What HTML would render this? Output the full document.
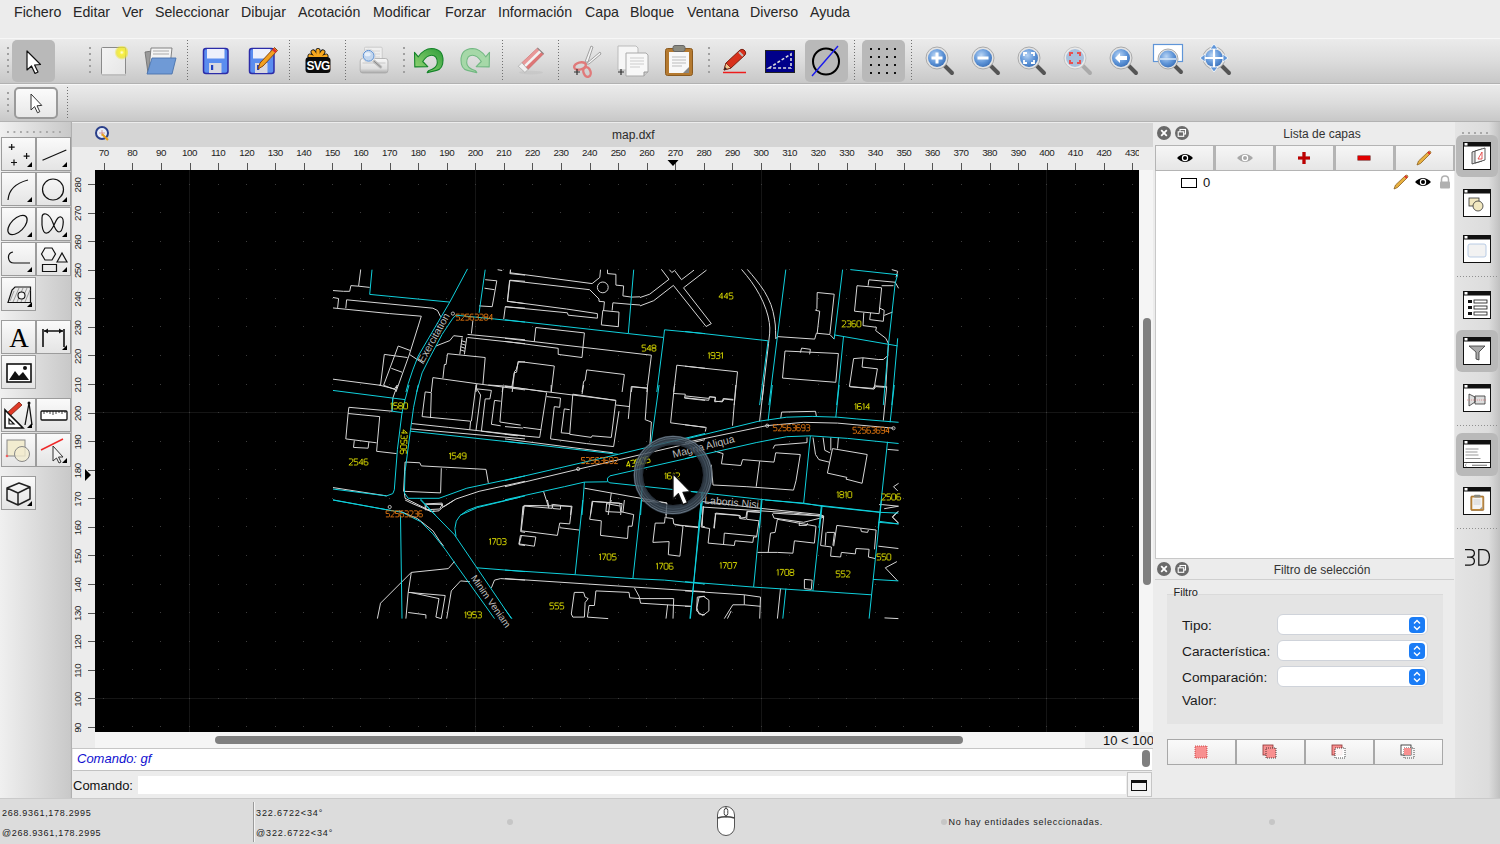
<!DOCTYPE html>
<html><head><meta charset="utf-8">
<style>
*{margin:0;padding:0;box-sizing:border-box}
html,body{width:1500px;height:844px;overflow:hidden;background:#ececec;font-family:"Liberation Sans",sans-serif;color:#222}
.a{position:absolute}
#menu span{position:absolute;top:3.5px;font-size:14.2px;color:#262626;white-space:nowrap}
.tb{position:absolute;left:0;width:1500px;background:linear-gradient(#ebebeb,#dcdcdc 50%,#c8c8c8)}
.hd{position:absolute;width:2px;background-image:linear-gradient(#a0a0a0 2px,transparent 2px);background-size:2px 6px}
.sep{position:absolute;width:1px;background-image:linear-gradient(#707070 50%,transparent 50%);background-size:1px 3px}
.sel{position:absolute;background:#b9b9b9;border-radius:5px}
.tbtn{position:absolute;width:35px;height:34px;border:1px solid #9c9c9c;background:linear-gradient(#fafafa,#e4e4e4)}
.tri{position:absolute;right:3px;bottom:3px;width:0;height:0;border-left:5px solid transparent;border-bottom:5px solid #000}
.rl{position:absolute;font-size:11px;color:#1e1e1e;white-space:nowrap}
</style></head><body>
<!-- menu -->
<div id="menu" class="a" style="left:0;top:0;width:1500px;height:38px;background:#ececec">
<span style="left:14px">Fichero</span><span style="left:73px">Editar</span><span style="left:122px">Ver</span><span style="left:155px">Seleccionar</span><span style="left:241px">Dibujar</span><span style="left:298px">Acotación</span><span style="left:373px">Modificar</span><span style="left:445px">Forzar</span><span style="left:498px">Información</span><span style="left:585px">Capa</span><span style="left:630px">Bloque</span><span style="left:687px">Ventana</span><span style="left:750px">Diverso</span><span style="left:810px">Ayuda</span>
</div>
<!-- toolbar 1 -->
<div class="tb" style="top:38px;height:46px;border-top:1px solid #f7f7f7;border-bottom:1px solid #b2b2b2"></div>
<!-- toolbar 2 -->
<div class="tb" style="top:84px;height:38px;border-top:1px solid #f7f7f7;border-bottom:1px solid #b2b2b2"></div>


<!-- toolbar1 icons -->
<div class="hd" style="left:7px;top:47px;height:26px"></div>
<div class="sel" style="left:12px;top:40px;width:43px;height:42px"></div>
<svg class="a" style="left:22px;top:49px" width="22" height="26" viewBox="0 0 22 26"><path d="M5 2 L5 21 L9.5 17 L13 24.5 L16 23 L12.6 16 L18.5 15.5 Z" fill="#fff" stroke="#111" stroke-width="1.2" stroke-linejoin="round"/></svg>
<div class="hd" style="left:89px;top:47px;height:26px"></div>
<svg class="a" style="left:100px;top:46px" width="28" height="31" viewBox="0 0 28 31"><defs><radialGradient id="gl"><stop offset="0" stop-color="#ffffe8"/><stop offset=".3" stop-color="#f8f040"/><stop offset=".7" stop-color="#ece428" stop-opacity=".75"/><stop offset="1" stop-color="#ece428" stop-opacity="0"/></radialGradient><linearGradient id="pg" x1="0" y1="0" x2="1" y2="1"><stop offset="0" stop-color="#f4f4f4"/><stop offset="1" stop-color="#e6e6e6"/></linearGradient></defs><rect x="1.5" y="1.5" width="24" height="27" rx="1" fill="url(#pg)" stroke="#8a8a8a"/><rect x="2" y="28" width="24" height="2" fill="#c0c0c0"/><circle cx="21.8" cy="6.5" r="7.5" fill="url(#gl)"/></svg>
<svg class="a" style="left:143px;top:46px" width="34" height="30" viewBox="0 0 34 30"><path d="M2 6 L9 5 L9 26 L5 27 Z" fill="#9a9a9a" stroke="#6a6a6a" stroke-width=".8"/><path d="M8 2 L29 2 L27 20 L6 24 Z" fill="#f4f4f4" stroke="#777" stroke-width=".9"/><path d="M10 5 L26 5 M10 8 L26 8" stroke="#aaa" stroke-width="1.2"/><path d="M9 12 L33 12 L29 28 L4 28 Z" fill="#6f9ad6" stroke="#4a73ad" stroke-width=".9"/></svg>
<div class="sep" style="left:187px;top:40px;height:42px"></div>
<svg class="a" style="left:202px;top:47px" width="28" height="28" viewBox="0 0 28 28"><rect x="1.5" y="1.5" width="24.5" height="25" rx="2.5" fill="#5b8def" stroke="#2c2ca8" stroke-width="1.5"/><rect x="5" y="2" width="17.5" height="9.5" fill="#eef0fb"/><rect x="7" y="16" width="12.5" height="10" fill="#d8d8e0"/><rect x="9" y="18" width="2.2" height="5" fill="#2040c0"/></svg>
<svg class="a" style="left:248px;top:44px" width="32" height="32" viewBox="0 0 32 32"><rect x="1.5" y="4.5" width="24.5" height="25" rx="2.5" fill="#5b8def" stroke="#2c2ca8" stroke-width="1.5"/><rect x="5" y="5" width="17.5" height="9.5" fill="#eef0fb"/><rect x="7" y="19" width="12.5" height="10" fill="#d8d8e0"/><rect x="9" y="21" width="2.2" height="5" fill="#2040c0"/><path d="M10 25 L12 19 L26.5 3.5 L29.5 6.5 L15 22 Z" fill="#f2a020" stroke="#8a4a10" stroke-width="1"/><path d="M25 5 L28 8" stroke="#e03030" stroke-width="2.5"/></svg>
<div class="sep" style="left:289px;top:40px;height:42px"></div>
<svg class="a" style="left:304px;top:46px" width="28" height="30" viewBox="0 0 28 30"><path d="M11.2 12.0L6.0 10.1" stroke="#111" stroke-width="5" stroke-linecap="round"/><path d="M12.3 10.5L9.1 6.0" stroke="#111" stroke-width="5" stroke-linecap="round"/><path d="M14.0 10.0L14.0 4.5" stroke="#111" stroke-width="5" stroke-linecap="round"/><path d="M15.7 10.5L18.9 6.0" stroke="#111" stroke-width="5" stroke-linecap="round"/><path d="M16.8 12.0L22.0 10.1" stroke="#111" stroke-width="5" stroke-linecap="round"/><path d="M11.2 12.0L6.0 10.1" stroke="#f7a81e" stroke-width="3.4" stroke-linecap="round"/><path d="M12.3 10.5L9.1 6.0" stroke="#f7a81e" stroke-width="3.4" stroke-linecap="round"/><path d="M14.0 10.0L14.0 4.5" stroke="#f7a81e" stroke-width="3.4" stroke-linecap="round"/><path d="M15.7 10.5L18.9 6.0" stroke="#f7a81e" stroke-width="3.4" stroke-linecap="round"/><path d="M16.8 12.0L22.0 10.1" stroke="#f7a81e" stroke-width="3.4" stroke-linecap="round"/><rect x="1.5" y="11" width="25" height="16" rx="3.5" fill="#0a0a0a"/><text x="14" y="24.5" font-family="Liberation Sans" font-weight="bold" font-size="12" fill="#fff" text-anchor="middle" transform="scale(1 1.1)" transform-origin="14 24.5" letter-spacing="-0.7">SVG</text></svg>
<div class="sep" style="left:345px;top:40px;height:42px"></div>
<svg class="a" style="left:359px;top:46px" width="31" height="31" viewBox="0 0 31 31"><defs><linearGradient id="pb" x1="0" y1="0" x2="0" y2="1"><stop offset="0" stop-color="#f8f8f8"/><stop offset=".7" stop-color="#dedede"/><stop offset="1" stop-color="#a8a8a8"/></linearGradient></defs><rect x="5.5" y="1.2" width="17.7" height="14" rx="1" fill="#efefef" stroke="#c4c4c4" stroke-width=".8"/><path d="M9 5h12M9 8h12M9 11h12" stroke="#d6d6d6"/><rect x="1.2" y="12.5" width="27.7" height="14.5" rx="2.5" fill="url(#pb)" stroke="#a8a8a8" stroke-width=".8"/><path d="M3.5 17h23" stroke="#c8c8c8" stroke-width="1"/><path d="M15 15.2 L21.6 21" stroke="#bcbcbc" stroke-width="3.2" stroke-linecap="round"/><path d="M15 15.2 L21.6 21" stroke="#8a8a8a" stroke-width="1" stroke-linecap="round"/><circle cx="9.6" cy="9.8" r="6.6" fill="#fafafa" stroke="#c8c8c8" stroke-width=".6"/><circle cx="9.6" cy="9.8" r="5.4" fill="#c2d6ee" stroke="#5b8ed0" stroke-width="1"/><ellipse cx="8.6" cy="8.2" rx="3" ry="2" fill="#e8f0fa"/></svg>
<div class="hd" style="left:403px;top:47px;height:26px"></div>
<svg class="a" style="left:412px;top:47px" width="33" height="28" viewBox="0 0 33 28"><defs><linearGradient id="ug" x1="0" y1="1" x2="1" y2="0"><stop offset="0" stop-color="#9ad878"/><stop offset="1" stop-color="#2f9e3a"/></linearGradient></defs><path d="M2.5 5.3 L6.3 9.8 Q12 1.5 19.6 1.5 Q31 2 31 13.3 Q31 22 24.6 23.4 L15.2 25.6 L16.4 23.8 Q25.3 21 25.3 15.8 Q25.3 8.2 19.6 8.2 Q14.5 8.2 10.7 14.5 L15.8 19.6 L2.8 19.9 Z" fill="url(#ug)" stroke="#15842a" stroke-width="1.1" stroke-linejoin="round"/></svg>
<svg class="a" style="left:459px;top:47px" width="33" height="28" viewBox="0 0 33 28"><g transform="translate(33,0) scale(-1,1)"><path d="M2.5 5.3 L6.3 9.8 Q12 1.5 19.6 1.5 Q31 2 31 13.3 Q31 22 24.6 23.4 L15.2 25.6 L16.4 23.8 Q25.3 21 25.3 15.8 Q25.3 8.2 19.6 8.2 Q14.5 8.2 10.7 14.5 L15.8 19.6 L2.8 19.9 Z" fill="#a6d8a8" stroke="#72b882" stroke-width="1.1" stroke-linejoin="round"/></g></svg>
<div class="sep" style="left:502px;top:40px;height:42px"></div>
<svg class="a" style="left:516px;top:46px" width="30" height="30" viewBox="0 0 30 30"><ellipse cx="15" cy="26.6" rx="12" ry="1.8" fill="#c4c4c4" opacity=".7"/><path d="M21.5 2.1 L27.6 7.9 L12 23.5 L5.9 16.7 Z" fill="#de7676" stroke="#b85858" stroke-width=".5"/><path d="M21.5 2.1 L24.55 5 L8.95 20.1 L5.9 16.7 Z" fill="#e89898"/><path d="M24.55 5 L8.95 20.1" stroke="#f2f2f2" stroke-width="2.6"/><path d="M5.9 16.7 L12 23.5 L8.9 26.4 L2.3 20.3 Z" fill="#f0f0f0" stroke="#9a9a9a" stroke-width=".6"/><path d="M21.5 2.1 L27.6 7.9" stroke="#8a8a8a" stroke-width="1.2"/></svg>
<div class="sep" style="left:558px;top:40px;height:42px"></div>
<svg class="a" style="left:571px;top:44px" width="32" height="34" viewBox="0 0 32 34"><path d="M14 18 L20 2 L22 3 L17 18 Z" fill="#f4f4f4" stroke="#999" stroke-width=".9"/><path d="M15 20 L29 8 L30 10 L18 20 Z" fill="#f4f4f4" stroke="#999" stroke-width=".9"/><ellipse cx="9" cy="22" rx="6" ry="3.5" fill="none" stroke="#e07a7a" stroke-width="2.4" transform="rotate(-15 9 22)"/><ellipse cx="16" cy="28" rx="3.5" ry="5" fill="none" stroke="#e07a7a" stroke-width="2.4" transform="rotate(-20 16 28)"/><path d="M3 28 L9 28 M6 25 L6 31" stroke="#333" stroke-width="1.2"/></svg>
<svg class="a" style="left:616px;top:45px" width="34" height="33" viewBox="0 0 34 33"><path d="M2 1 L20 1 L22 3 L22 25 L2 25 Z" fill="#f6f6f6" stroke="#bbb"/><path d="M10 8 L30 8 L32 10 L32 27 L28 31 L10 31 Z" fill="#f8f8f8" stroke="#aaa"/><path d="M28 31 L28 27 L32 27" fill="#ccc" stroke="#999"/><path d="M14 13h14M14 16h14M14 19h14M14 22h10" stroke="#ccc"/><path d="M2 27h6M5 24v6" stroke="#333" stroke-width="1.2"/></svg>
<svg class="a" style="left:664px;top:44px" width="30" height="33" viewBox="0 0 30 33"><rect x="1.5" y="4.5" width="27" height="27" rx="2" fill="#b57a30" stroke="#8a5a20"/><rect x="5" y="8" width="20" height="21" fill="#f8f8f8"/><rect x="9" y="1.5" width="12" height="6" rx="2" fill="#8a8a80" stroke="#666"/><path d="M8 13h14M8 16h14M8 19h14M8 22h10" stroke="#bbb"/><path d="M25 23 L25 29 L19 29 Z" fill="#888"/></svg>
<div class="hd" style="left:708px;top:47px;height:26px"></div>
<svg class="a" style="left:722px;top:48px" width="26" height="26" viewBox="0 0 26 26"><path d="M2 22 L4 15 L18 2 Q20 0.5 22 2 L23 3 Q24.5 5 23 7 L9 20 Z" fill="#d8301c" stroke="#7a2010" stroke-width="1"/><path d="M2 22 L4 15 L9 20 Z" fill="#f0c890" stroke="#7a2010" stroke-width=".8"/><path d="M2 22 L3 19 L5 21 Z" fill="#222"/><path d="M17 4 L21 8" stroke="#bbb" stroke-width="2"/><path d="M1 24.5 L24 24.5" stroke="#ee1c1c" stroke-width="1.5"/></svg>
<svg class="a" style="left:765px;top:50px" width="31" height="23" viewBox="0 0 31 23"><rect x="0.5" y="0.5" width="29" height="22" fill="#00008a" stroke="#222"/><path d="M4 18 L26 4 L26 18 Z" fill="none" stroke="#ddd" stroke-width="1.6" stroke-dasharray="3 2"/></svg>
<div class="sel" style="left:805px;top:40px;width:43px;height:42px"></div>
<svg class="a" style="left:810px;top:45px" width="32" height="32" viewBox="0 0 32 32"><circle cx="16" cy="16.5" r="13" fill="none" stroke="#000" stroke-width="2"/><path d="M2 31 L28 1" stroke="#1a1aee" stroke-width="1.4"/></svg>
<div class="sep" style="left:854px;top:40px;height:42px"></div>
<div class="sel" style="left:862px;top:40px;width:43px;height:42px"></div>
<svg class="a" style="left:868px;top:46px" width="30" height="28" viewBox="0 0 30 28"><g fill="#111"><rect x="2" y="2" width="2" height="2"/><rect x="10" y="2" width="2" height="2"/><rect x="18" y="2" width="2" height="2"/><rect x="26" y="2" width="2" height="2"/><rect x="2" y="10" width="2" height="2"/><rect x="10" y="10" width="2" height="2"/><rect x="18" y="10" width="2" height="2"/><rect x="26" y="10" width="2" height="2"/><rect x="2" y="18" width="2" height="2"/><rect x="10" y="18" width="2" height="2"/><rect x="18" y="18" width="2" height="2"/><rect x="26" y="18" width="2" height="2"/><rect x="2" y="26" width="2" height="2"/><rect x="10" y="26" width="2" height="2"/><rect x="18" y="26" width="2" height="2"/><rect x="26" y="26" width="2" height="2"/></g></svg>
<div class="sep" style="left:911px;top:40px;height:42px"></div>
<svg class="a" style="left:924px;top:44.5px" width="32" height="32" viewBox="0 0 32 32"><defs><radialGradient id="zb" cx=".4" cy=".35" r=".7"><stop offset="0" stop-color="#b8d4f4"/><stop offset=".6" stop-color="#5f95d8"/><stop offset="1" stop-color="#3a70b8"/></radialGradient></defs><path d="M21 21 L28 28" stroke="#555" stroke-width="4" stroke-linecap="round"/><circle cx="13" cy="13" r="11" fill="#e4e4e4" stroke="#aaa"/><circle cx="13" cy="13" r="9" fill="url(#zb)"/><path d="M13 7.5v11M7.5 13h11" stroke="#fff" stroke-width="3"/></svg><svg class="a" style="left:970px;top:44.5px" width="32" height="32" viewBox="0 0 32 32"><path d="M21 21 L28 28" stroke="#555" stroke-width="4" stroke-linecap="round"/><circle cx="13" cy="13" r="11" fill="#e4e4e4" stroke="#aaa"/><circle cx="13" cy="13" r="9" fill="url(#zb)"/><path d="M7.5 13h11" stroke="#fff" stroke-width="3"/></svg><svg class="a" style="left:1016px;top:44.5px" width="32" height="32" viewBox="0 0 32 32"><path d="M21 21 L28 28" stroke="#555" stroke-width="4" stroke-linecap="round"/><circle cx="13" cy="13" r="11" fill="#e4e4e4" stroke="#aaa"/><circle cx="13" cy="13" r="9" fill="url(#zb)"/><path d="M8 11V8h3M15 8h3v3M18 15v3h-3M11 18H8v-3" stroke="#fff" stroke-width="1.8" fill="none"/></svg><svg class="a" style="left:1062px;top:44.5px" width="32" height="32" viewBox="0 0 32 32"><path d="M21 21 L28 28" stroke="#aaa" stroke-width="4" stroke-linecap="round"/><circle cx="13" cy="13" r="11" fill="#eaeaea" stroke="#c4c4c4"/><circle cx="13" cy="13" r="9" fill="#a8c0dc"/><path d="M8 11V8h3M15 8h3v3M18 15v3h-3M11 18H8v-3" stroke="#e85050" stroke-width="2" fill="none"/></svg><svg class="a" style="left:1108px;top:44.5px" width="32" height="32" viewBox="0 0 32 32"><path d="M21 21 L28 28" stroke="#555" stroke-width="4" stroke-linecap="round"/><circle cx="13" cy="13" r="11" fill="#e4e4e4" stroke="#aaa"/><circle cx="13" cy="13" r="9" fill="url(#zb)"/><path d="M7 13 L12 8 L12 11 L19 11 L19 15 L12 15 L12 18 Z" fill="#fff"/></svg><svg class="a" style="left:1152px;top:43px" width="34" height="34" viewBox="0 0 34 34"><rect x="1.5" y="1.5" width="29" height="17" fill="#fff" stroke="#5f95d8" stroke-width="1.2"/><path d="M22 22 L29 29" stroke="#555" stroke-width="4" stroke-linecap="round"/><circle cx="16" cy="16" r="10" fill="#e4e4e4" stroke="#aaa"/><circle cx="16" cy="16" r="8.5" fill="url(#zb)"/><path d="M8 16h16" stroke="#d8e8f8" stroke-width="1.5"/></svg><svg class="a" style="left:1199px;top:43px" width="34" height="34" viewBox="0 0 34 34"><path d="M23 23 L30 30" stroke="#555" stroke-width="4" stroke-linecap="round"/><circle cx="15" cy="15" r="11" fill="#e4e4e4" stroke="#aaa"/><circle cx="15" cy="15" r="9" fill="url(#zb)"/><path d="M15 2v26M2 15h26" stroke="#fff" stroke-width="2.2"/><path d="M15 1 L11 6 L19 6 Z M15 29 L11 24 L19 24 Z M1 15 L6 11 L6 19 Z M29 15 L24 11 L24 19 Z" fill="#5f95d8" stroke="#fff" stroke-width=".8"/></svg>
<!-- toolbar2 -->
<div class="hd" style="left:7px;top:92px;height:24px"></div>
<div class="a" style="left:14px;top:87px;width:44px;height:32px;border:2px solid #9a9a9a;border-radius:5px;background:linear-gradient(#fbfbfb,#e8e8e8)"></div>
<svg class="a" style="left:26px;top:91px" width="20" height="24" viewBox="0 0 20 24"><path d="M5 3 L5 19 L8.6 15.6 L11.5 21.8 L13.8 20.7 L11 14.8 L15.8 14.4 Z" fill="#fff" stroke="#333" stroke-width="1" stroke-linejoin="round"/></svg>
<div class="sep" style="left:67px;top:87px;height:33px"></div>

<!-- left dock -->
<div class="a" style="left:0;top:122px;width:72px;height:676px;background:linear-gradient(90deg,#f0f0f0,#dcdcdc 50%,#c9c9c9 97%,#bdbdbd)"></div>

<div class="tbtn" style="left:1px;top:137px"><svg width="33" height="32" viewBox="0 0 33 32" style="position:absolute;left:0;top:0"><path d="M9.7 6.1v6M6.7 9.1h6M24.6 15.1v6M21.6 18.1h6M12 21.5v6M9 24.5h6" stroke="#111" fill="none" stroke-width="1.2"/></svg><div class="tri"></div></div>
<div class="tbtn" style="left:36px;top:137px"><svg width="33" height="32" viewBox="0 0 33 32" style="position:absolute;left:0;top:0"><path d="M5.5 22.2 L29.3 12" stroke="#111" fill="none" stroke-width="1.2"/></svg><div class="tri"></div></div>
<div class="tbtn" style="left:1px;top:172px"><svg width="33" height="32" viewBox="0 0 33 32" style="position:absolute;left:0;top:0"><path d="M6 27 Q7 12 26 7" stroke="#111" fill="none" stroke-width="1.2"/></svg><div class="tri"></div></div>
<div class="tbtn" style="left:36px;top:172px"><svg width="33" height="32" viewBox="0 0 33 32" style="position:absolute;left:0;top:0"><circle cx="16" cy="16.5" r="10.5" stroke="#111" fill="none" stroke-width="1.2"/></svg><div class="tri"></div></div>
<div class="tbtn" style="left:1px;top:207px"><svg width="33" height="32" viewBox="0 0 33 32" style="position:absolute;left:0;top:0"><ellipse cx="15.5" cy="17" rx="12" ry="6.5" transform="rotate(-45 15.5 17)" stroke="#111" fill="none" stroke-width="1.2"/></svg><div class="tri"></div></div>
<div class="tbtn" style="left:36px;top:207px"><svg width="33" height="32" viewBox="0 0 33 32" style="position:absolute;left:0;top:0"><path d="M5 10 Q5 5 9 6 Q13 7 16 15 Q19 24 22 24 Q25 24 26 17 Q27 10 24 9 Q21 8 18 15 Q14 24 10 25 Q6 26 5 17 Z" stroke="#111" fill="none" stroke-width="1.2"/></svg><div class="tri"></div></div>
<div class="tbtn" style="left:1px;top:242px"><svg width="33" height="32" viewBox="0 0 33 32" style="position:absolute;left:0;top:0"><path d="M11 9 Q6 10 6.5 15 Q7 20 12 20 L28 20" stroke="#111" fill="none" stroke-width="1.2"/></svg><div class="tri"></div></div>
<div class="tbtn" style="left:36px;top:242px"><svg width="33" height="32" viewBox="0 0 33 32" style="position:absolute;left:0;top:0"><path d="M4.5 11 L8 5 L15 5 L18.5 11 L15 17 L8 17 Z M20 19 L25 10 L30 19 Z M5.5 21.5h14v7h-14z" stroke="#111" fill="none" stroke-width="1.2"/></svg><div class="tri"></div></div>
<div class="tbtn" style="left:1px;top:277px"><svg width="33" height="32" viewBox="0 0 33 32" style="position:absolute;left:0;top:0"><path d="M6 24.5 L10 12 L13 9 L28.5 9 L28.5 24.5 Z" fill="#e8e8e8" stroke="#111" stroke-width="1.2"/><path d="M8 23l4-10M11 24l6-14M15 24l6-14M19 24l6-14M23 24l5-12" stroke="#888" stroke-width=".8"/><circle cx="19.5" cy="17.5" r="3.5" fill="#f4f4f4" stroke="#111" stroke-width="1.1"/></svg><div class="tri"></div></div>
<div class="tbtn" style="left:1px;top:320px"><svg width="33" height="32" viewBox="0 0 33 32" style="position:absolute;left:0;top:0"><text x="17" y="26" font-family="Liberation Serif" font-size="27" text-anchor="middle" fill="#000">A</text></svg></div>
<div class="tbtn" style="left:36px;top:320px"><svg width="33" height="32" viewBox="0 0 33 32" style="position:absolute;left:0;top:0"><path d="M6 26V8M27 26V8M7 10h19" stroke="#111" stroke-width="1.6" fill="none"/><path d="M7 10l4-2.5v5zM26 10l-4-2.5v5z" fill="#111"/></svg><div class="tri"></div></div>
<div class="tbtn" style="left:1px;top:355px"><svg width="33" height="32" viewBox="0 0 33 32" style="position:absolute;left:0;top:0"><rect x="5" y="8" width="24" height="18" fill="#fff" stroke="#111" stroke-width="1.6"/><path d="M7 24 L13 15 L17 20 L21 16 L27 24 Z" fill="#111"/><circle cx="23" cy="12" r="2" fill="#111"/></svg></div>
<div class="tbtn" style="left:1px;top:398px"><svg width="33" height="32" viewBox="0 0 33 32" style="position:absolute;left:0;top:0"><path d="M3 29 L3 11 L21 29 Z" fill="#fff" stroke="#111" stroke-width="1.6"/><path d="M7 25 L7 20 L12 25 Z" fill="none" stroke="#111" stroke-width="1.2"/><path d="M6 13 L17 3 L20 6 L9 16 Z" fill="#e03a28" stroke="#7a2010" stroke-width=".8"/><path d="M27 4 L23 26 M27 4 L30 26" stroke="#111" stroke-width="1.3" fill="none"/><circle cx="27" cy="4" r="1.5" fill="#111"/></svg><div class="tri"></div></div>
<div class="tbtn" style="left:36px;top:398px"><svg width="33" height="32" viewBox="0 0 33 32" style="position:absolute;left:0;top:0"><rect x="4" y="12" width="26" height="9" rx="1" fill="#fff" stroke="#111" stroke-width="1.3"/><path d="M7 12v3M10 12v2M13 12v3M16 12v4M19 12v3M22 12v2M25 12v3M28 12v2" stroke="#111" stroke-width=".8"/></svg></div>
<div class="tbtn" style="left:1px;top:433px"><svg width="33" height="32" viewBox="0 0 33 32" style="position:absolute;left:0;top:0"><rect x="5" y="6" width="18" height="16" fill="#f2ecd0" stroke="#888" stroke-width="1"/><circle cx="20" cy="20" r="7.5" fill="#f2ecd0" fill-opacity=".8" stroke="#888" stroke-width="1"/><circle cx="5" cy="22" r="1.3" fill="#f06060"/></svg></div>
<div class="tbtn" style="left:36px;top:433px"><svg width="33" height="32" viewBox="0 0 33 32" style="position:absolute;left:0;top:0"><path d="M4 16 L26 5" stroke="#ee2a2a" stroke-width="1.4"/><path d="M16 12 L16 27 L19.5 24 L22 29 L24 28 L21.5 23 L26 23 Z" fill="#f4f4f4" stroke="#333" stroke-width="1"/></svg><div class="tri"></div></div>
<div class="tbtn" style="left:1px;top:476px"><svg width="33" height="32" viewBox="0 0 33 32" style="position:absolute;left:0;top:0"><path d="M5 11 L17 6 L28 10 L28 22 L16 28 L5 23 Z M5 11 L16 16 L28 10 M16 16 L16 28" fill="none" stroke="#222" stroke-width="1.5" stroke-linejoin="round"/></svg><div class="tri"></div></div><div class="a" style="left:7px;top:131px;width:58px;height:2px;background-image:linear-gradient(90deg,#a8a8a8 2px,transparent 2px);background-size:6.5px 2px"></div><div class="a" style="left:71px;top:122px;width:1px;height:676px;background:#b0b0b0"></div>
<!-- MDI title -->
<div class="a" style="left:72px;top:123px;width:1081px;height:24px;background:#d5d5d5"></div>
<svg class="a" style="left:95px;top:126px" width="15" height="15" viewBox="0 0 15 15"><circle cx="7" cy="7" r="6" fill="#e8eef8" stroke="#2a3f8a" stroke-width="2"/><path d="M4 7h6M7 4v6" stroke="#d08080" stroke-width=".8"/><path d="M7 8 L13 14" stroke="#e8a020" stroke-width="2.2"/></svg><div class="a" style="left:612px;top:128px;font-size:12px;color:#2a2a2a">map.dxf</div>
<!-- rulers -->
<div class="a" style="left:72px;top:147px;width:1081px;height:23px;background:#ececec"></div>
<div class="a" style="left:72px;top:147px;width:23px;height:601px;background:#ececec"></div>
<!-- canvas -->
<div class="a" style="left:95px;top:170px;width:1044px;height:562px;background:#000;overflow:hidden" id="cv"></div>
<svg class="a" style="left:95px;top:147px;overflow:hidden" width="1044" height="23" viewBox="95 147 1044 23"><rect x="104" y="163" width="1" height="7" fill="#555"/><text x="103.8" y="156.2" font-size="9.8" text-anchor="middle" fill="#1e1e1e" letter-spacing="-0.5">70</text><rect x="132" y="163" width="1" height="7" fill="#555"/><text x="132.3" y="156.2" font-size="9.8" text-anchor="middle" fill="#1e1e1e" letter-spacing="-0.5">80</text><rect x="161" y="163" width="1" height="7" fill="#555"/><text x="160.9" y="156.2" font-size="9.8" text-anchor="middle" fill="#1e1e1e" letter-spacing="-0.5">90</text><rect x="190" y="163" width="1" height="7" fill="#555"/><text x="189.5" y="156.2" font-size="9.8" text-anchor="middle" fill="#1e1e1e" letter-spacing="-0.5">100</text><rect x="218" y="163" width="1" height="7" fill="#555"/><text x="218.1" y="156.2" font-size="9.8" text-anchor="middle" fill="#1e1e1e" letter-spacing="-0.5">110</text><rect x="247" y="163" width="1" height="7" fill="#555"/><text x="246.7" y="156.2" font-size="9.8" text-anchor="middle" fill="#1e1e1e" letter-spacing="-0.5">120</text><rect x="275" y="163" width="1" height="7" fill="#555"/><text x="275.2" y="156.2" font-size="9.8" text-anchor="middle" fill="#1e1e1e" letter-spacing="-0.5">130</text><rect x="304" y="163" width="1" height="7" fill="#555"/><text x="303.8" y="156.2" font-size="9.8" text-anchor="middle" fill="#1e1e1e" letter-spacing="-0.5">140</text><rect x="332" y="163" width="1" height="7" fill="#555"/><text x="332.4" y="156.2" font-size="9.8" text-anchor="middle" fill="#1e1e1e" letter-spacing="-0.5">150</text><rect x="361" y="163" width="1" height="7" fill="#555"/><text x="360.9" y="156.2" font-size="9.8" text-anchor="middle" fill="#1e1e1e" letter-spacing="-0.5">160</text><rect x="390" y="163" width="1" height="7" fill="#555"/><text x="389.5" y="156.2" font-size="9.8" text-anchor="middle" fill="#1e1e1e" letter-spacing="-0.5">170</text><rect x="418" y="163" width="1" height="7" fill="#555"/><text x="418.1" y="156.2" font-size="9.8" text-anchor="middle" fill="#1e1e1e" letter-spacing="-0.5">180</text><rect x="447" y="163" width="1" height="7" fill="#555"/><text x="446.7" y="156.2" font-size="9.8" text-anchor="middle" fill="#1e1e1e" letter-spacing="-0.5">190</text><rect x="475" y="163" width="1" height="7" fill="#555"/><text x="475.2" y="156.2" font-size="9.8" text-anchor="middle" fill="#1e1e1e" letter-spacing="-0.5">200</text><rect x="504" y="163" width="1" height="7" fill="#555"/><text x="503.8" y="156.2" font-size="9.8" text-anchor="middle" fill="#1e1e1e" letter-spacing="-0.5">210</text><rect x="532" y="163" width="1" height="7" fill="#555"/><text x="532.4" y="156.2" font-size="9.8" text-anchor="middle" fill="#1e1e1e" letter-spacing="-0.5">220</text><rect x="561" y="163" width="1" height="7" fill="#555"/><text x="561.0" y="156.2" font-size="9.8" text-anchor="middle" fill="#1e1e1e" letter-spacing="-0.5">230</text><rect x="590" y="163" width="1" height="7" fill="#555"/><text x="589.5" y="156.2" font-size="9.8" text-anchor="middle" fill="#1e1e1e" letter-spacing="-0.5">240</text><rect x="618" y="163" width="1" height="7" fill="#555"/><text x="618.1" y="156.2" font-size="9.8" text-anchor="middle" fill="#1e1e1e" letter-spacing="-0.5">250</text><rect x="647" y="163" width="1" height="7" fill="#555"/><text x="646.7" y="156.2" font-size="9.8" text-anchor="middle" fill="#1e1e1e" letter-spacing="-0.5">260</text><rect x="675" y="163" width="1" height="7" fill="#555"/><text x="675.3" y="156.2" font-size="9.8" text-anchor="middle" fill="#1e1e1e" letter-spacing="-0.5">270</text><rect x="704" y="163" width="1" height="7" fill="#555"/><text x="703.9" y="156.2" font-size="9.8" text-anchor="middle" fill="#1e1e1e" letter-spacing="-0.5">280</text><rect x="732" y="163" width="1" height="7" fill="#555"/><text x="732.4" y="156.2" font-size="9.8" text-anchor="middle" fill="#1e1e1e" letter-spacing="-0.5">290</text><rect x="761" y="163" width="1" height="7" fill="#555"/><text x="761.0" y="156.2" font-size="9.8" text-anchor="middle" fill="#1e1e1e" letter-spacing="-0.5">300</text><rect x="790" y="163" width="1" height="7" fill="#555"/><text x="789.6" y="156.2" font-size="9.8" text-anchor="middle" fill="#1e1e1e" letter-spacing="-0.5">310</text><rect x="818" y="163" width="1" height="7" fill="#555"/><text x="818.1" y="156.2" font-size="9.8" text-anchor="middle" fill="#1e1e1e" letter-spacing="-0.5">320</text><rect x="847" y="163" width="1" height="7" fill="#555"/><text x="846.7" y="156.2" font-size="9.8" text-anchor="middle" fill="#1e1e1e" letter-spacing="-0.5">330</text><rect x="875" y="163" width="1" height="7" fill="#555"/><text x="875.3" y="156.2" font-size="9.8" text-anchor="middle" fill="#1e1e1e" letter-spacing="-0.5">340</text><rect x="904" y="163" width="1" height="7" fill="#555"/><text x="903.9" y="156.2" font-size="9.8" text-anchor="middle" fill="#1e1e1e" letter-spacing="-0.5">350</text><rect x="932" y="163" width="1" height="7" fill="#555"/><text x="932.4" y="156.2" font-size="9.8" text-anchor="middle" fill="#1e1e1e" letter-spacing="-0.5">360</text><rect x="961" y="163" width="1" height="7" fill="#555"/><text x="961.0" y="156.2" font-size="9.8" text-anchor="middle" fill="#1e1e1e" letter-spacing="-0.5">370</text><rect x="990" y="163" width="1" height="7" fill="#555"/><text x="989.6" y="156.2" font-size="9.8" text-anchor="middle" fill="#1e1e1e" letter-spacing="-0.5">380</text><rect x="1018" y="163" width="1" height="7" fill="#555"/><text x="1018.2" y="156.2" font-size="9.8" text-anchor="middle" fill="#1e1e1e" letter-spacing="-0.5">390</text><rect x="1047" y="163" width="1" height="7" fill="#555"/><text x="1046.8" y="156.2" font-size="9.8" text-anchor="middle" fill="#1e1e1e" letter-spacing="-0.5">400</text><rect x="1075" y="163" width="1" height="7" fill="#555"/><text x="1075.3" y="156.2" font-size="9.8" text-anchor="middle" fill="#1e1e1e" letter-spacing="-0.5">410</text><rect x="1104" y="163" width="1" height="7" fill="#555"/><text x="1103.9" y="156.2" font-size="9.8" text-anchor="middle" fill="#1e1e1e" letter-spacing="-0.5">420</text><rect x="1132" y="163" width="1" height="7" fill="#555"/><text x="1132.5" y="156.2" font-size="9.8" text-anchor="middle" fill="#1e1e1e" letter-spacing="-0.5">430</text><path d="M667.5 160 L678.5 160 L673 166 Z" fill="#000"/></svg>
<svg class="a" style="left:72px;top:170px;overflow:hidden" width="23" height="562" viewBox="72 170 23 562"><rect x="88" y="727" width="7" height="1" fill="#555"/><text transform="translate(81.2 727.9) rotate(-90)" font-size="9.8" text-anchor="middle" fill="#1e1e1e" letter-spacing="-0.5">90</text><rect x="88" y="698" width="7" height="1" fill="#555"/><text transform="translate(81.2 699.4) rotate(-90)" font-size="9.8" text-anchor="middle" fill="#1e1e1e" letter-spacing="-0.5">100</text><rect x="88" y="670" width="7" height="1" fill="#555"/><text transform="translate(81.2 670.8) rotate(-90)" font-size="9.8" text-anchor="middle" fill="#1e1e1e" letter-spacing="-0.5">110</text><rect x="88" y="641" width="7" height="1" fill="#555"/><text transform="translate(81.2 642.2) rotate(-90)" font-size="9.8" text-anchor="middle" fill="#1e1e1e" letter-spacing="-0.5">120</text><rect x="88" y="613" width="7" height="1" fill="#555"/><text transform="translate(81.2 613.6) rotate(-90)" font-size="9.8" text-anchor="middle" fill="#1e1e1e" letter-spacing="-0.5">130</text><rect x="88" y="584" width="7" height="1" fill="#555"/><text transform="translate(81.2 585.0) rotate(-90)" font-size="9.8" text-anchor="middle" fill="#1e1e1e" letter-spacing="-0.5">140</text><rect x="88" y="555" width="7" height="1" fill="#555"/><text transform="translate(81.2 556.5) rotate(-90)" font-size="9.8" text-anchor="middle" fill="#1e1e1e" letter-spacing="-0.5">150</text><rect x="88" y="527" width="7" height="1" fill="#555"/><text transform="translate(81.2 527.9) rotate(-90)" font-size="9.8" text-anchor="middle" fill="#1e1e1e" letter-spacing="-0.5">160</text><rect x="88" y="498" width="7" height="1" fill="#555"/><text transform="translate(81.2 499.3) rotate(-90)" font-size="9.8" text-anchor="middle" fill="#1e1e1e" letter-spacing="-0.5">170</text><rect x="88" y="470" width="7" height="1" fill="#555"/><text transform="translate(81.2 470.8) rotate(-90)" font-size="9.8" text-anchor="middle" fill="#1e1e1e" letter-spacing="-0.5">180</text><rect x="88" y="441" width="7" height="1" fill="#555"/><text transform="translate(81.2 442.2) rotate(-90)" font-size="9.8" text-anchor="middle" fill="#1e1e1e" letter-spacing="-0.5">190</text><rect x="88" y="413" width="7" height="1" fill="#555"/><text transform="translate(81.2 413.6) rotate(-90)" font-size="9.8" text-anchor="middle" fill="#1e1e1e" letter-spacing="-0.5">200</text><rect x="88" y="384" width="7" height="1" fill="#555"/><text transform="translate(81.2 385.0) rotate(-90)" font-size="9.8" text-anchor="middle" fill="#1e1e1e" letter-spacing="-0.5">210</text><rect x="88" y="355" width="7" height="1" fill="#555"/><text transform="translate(81.2 356.5) rotate(-90)" font-size="9.8" text-anchor="middle" fill="#1e1e1e" letter-spacing="-0.5">220</text><rect x="88" y="327" width="7" height="1" fill="#555"/><text transform="translate(81.2 327.9) rotate(-90)" font-size="9.8" text-anchor="middle" fill="#1e1e1e" letter-spacing="-0.5">230</text><rect x="88" y="298" width="7" height="1" fill="#555"/><text transform="translate(81.2 299.3) rotate(-90)" font-size="9.8" text-anchor="middle" fill="#1e1e1e" letter-spacing="-0.5">240</text><rect x="88" y="270" width="7" height="1" fill="#555"/><text transform="translate(81.2 270.7) rotate(-90)" font-size="9.8" text-anchor="middle" fill="#1e1e1e" letter-spacing="-0.5">250</text><rect x="88" y="241" width="7" height="1" fill="#555"/><text transform="translate(81.2 242.2) rotate(-90)" font-size="9.8" text-anchor="middle" fill="#1e1e1e" letter-spacing="-0.5">260</text><rect x="88" y="213" width="7" height="1" fill="#555"/><text transform="translate(81.2 213.6) rotate(-90)" font-size="9.8" text-anchor="middle" fill="#1e1e1e" letter-spacing="-0.5">270</text><rect x="88" y="184" width="7" height="1" fill="#555"/><text transform="translate(81.2 185.0) rotate(-90)" font-size="9.8" text-anchor="middle" fill="#1e1e1e" letter-spacing="-0.5">280</text><path d="M85 469 L85 481 L91 475 Z" fill="#000"/></svg>
<svg class="a" style="left:95px;top:170px" width="1044" height="562" viewBox="95 170 1044 562"><rect x="189" y="170" width="1" height="562" fill="#151515"/><rect x="475" y="170" width="1" height="562" fill="#151515"/><rect x="761" y="170" width="1" height="562" fill="#151515"/><rect x="1046" y="170" width="1" height="562" fill="#151515"/><rect x="95" y="698" width="1044" height="1" fill="#151515"/><rect x="95" y="412" width="1044" height="1" fill="#151515"/><g fill="#3c3c3c"><rect x="103" y="726" width="1" height="1"/><rect x="103" y="698" width="1" height="1"/><rect x="103" y="669" width="1" height="1"/><rect x="103" y="641" width="1" height="1"/><rect x="103" y="612" width="1" height="1"/><rect x="103" y="584" width="1" height="1"/><rect x="103" y="555" width="1" height="1"/><rect x="103" y="526" width="1" height="1"/><rect x="103" y="498" width="1" height="1"/><rect x="103" y="469" width="1" height="1"/><rect x="103" y="441" width="1" height="1"/><rect x="103" y="412" width="1" height="1"/><rect x="103" y="384" width="1" height="1"/><rect x="103" y="355" width="1" height="1"/><rect x="103" y="326" width="1" height="1"/><rect x="103" y="298" width="1" height="1"/><rect x="103" y="269" width="1" height="1"/><rect x="103" y="241" width="1" height="1"/><rect x="103" y="212" width="1" height="1"/><rect x="103" y="184" width="1" height="1"/><rect x="132" y="726" width="1" height="1"/><rect x="132" y="698" width="1" height="1"/><rect x="132" y="669" width="1" height="1"/><rect x="132" y="641" width="1" height="1"/><rect x="132" y="612" width="1" height="1"/><rect x="132" y="584" width="1" height="1"/><rect x="132" y="555" width="1" height="1"/><rect x="132" y="526" width="1" height="1"/><rect x="132" y="498" width="1" height="1"/><rect x="132" y="469" width="1" height="1"/><rect x="132" y="441" width="1" height="1"/><rect x="132" y="412" width="1" height="1"/><rect x="132" y="384" width="1" height="1"/><rect x="132" y="355" width="1" height="1"/><rect x="132" y="326" width="1" height="1"/><rect x="132" y="298" width="1" height="1"/><rect x="132" y="269" width="1" height="1"/><rect x="132" y="241" width="1" height="1"/><rect x="132" y="212" width="1" height="1"/><rect x="132" y="184" width="1" height="1"/><rect x="160" y="726" width="1" height="1"/><rect x="160" y="698" width="1" height="1"/><rect x="160" y="669" width="1" height="1"/><rect x="160" y="641" width="1" height="1"/><rect x="160" y="612" width="1" height="1"/><rect x="160" y="584" width="1" height="1"/><rect x="160" y="555" width="1" height="1"/><rect x="160" y="526" width="1" height="1"/><rect x="160" y="498" width="1" height="1"/><rect x="160" y="469" width="1" height="1"/><rect x="160" y="441" width="1" height="1"/><rect x="160" y="412" width="1" height="1"/><rect x="160" y="384" width="1" height="1"/><rect x="160" y="355" width="1" height="1"/><rect x="160" y="326" width="1" height="1"/><rect x="160" y="298" width="1" height="1"/><rect x="160" y="269" width="1" height="1"/><rect x="160" y="241" width="1" height="1"/><rect x="160" y="212" width="1" height="1"/><rect x="160" y="184" width="1" height="1"/><rect x="189" y="726" width="1" height="1"/><rect x="189" y="698" width="1" height="1"/><rect x="189" y="669" width="1" height="1"/><rect x="189" y="641" width="1" height="1"/><rect x="189" y="612" width="1" height="1"/><rect x="189" y="584" width="1" height="1"/><rect x="189" y="555" width="1" height="1"/><rect x="189" y="526" width="1" height="1"/><rect x="189" y="498" width="1" height="1"/><rect x="189" y="469" width="1" height="1"/><rect x="189" y="441" width="1" height="1"/><rect x="189" y="412" width="1" height="1"/><rect x="189" y="384" width="1" height="1"/><rect x="189" y="355" width="1" height="1"/><rect x="189" y="326" width="1" height="1"/><rect x="189" y="298" width="1" height="1"/><rect x="189" y="269" width="1" height="1"/><rect x="189" y="241" width="1" height="1"/><rect x="189" y="212" width="1" height="1"/><rect x="189" y="184" width="1" height="1"/><rect x="218" y="726" width="1" height="1"/><rect x="218" y="698" width="1" height="1"/><rect x="218" y="669" width="1" height="1"/><rect x="218" y="641" width="1" height="1"/><rect x="218" y="612" width="1" height="1"/><rect x="218" y="584" width="1" height="1"/><rect x="218" y="555" width="1" height="1"/><rect x="218" y="526" width="1" height="1"/><rect x="218" y="498" width="1" height="1"/><rect x="218" y="469" width="1" height="1"/><rect x="218" y="441" width="1" height="1"/><rect x="218" y="412" width="1" height="1"/><rect x="218" y="384" width="1" height="1"/><rect x="218" y="355" width="1" height="1"/><rect x="218" y="326" width="1" height="1"/><rect x="218" y="298" width="1" height="1"/><rect x="218" y="269" width="1" height="1"/><rect x="218" y="241" width="1" height="1"/><rect x="218" y="212" width="1" height="1"/><rect x="218" y="184" width="1" height="1"/><rect x="246" y="726" width="1" height="1"/><rect x="246" y="698" width="1" height="1"/><rect x="246" y="669" width="1" height="1"/><rect x="246" y="641" width="1" height="1"/><rect x="246" y="612" width="1" height="1"/><rect x="246" y="584" width="1" height="1"/><rect x="246" y="555" width="1" height="1"/><rect x="246" y="526" width="1" height="1"/><rect x="246" y="498" width="1" height="1"/><rect x="246" y="469" width="1" height="1"/><rect x="246" y="441" width="1" height="1"/><rect x="246" y="412" width="1" height="1"/><rect x="246" y="384" width="1" height="1"/><rect x="246" y="355" width="1" height="1"/><rect x="246" y="326" width="1" height="1"/><rect x="246" y="298" width="1" height="1"/><rect x="246" y="269" width="1" height="1"/><rect x="246" y="241" width="1" height="1"/><rect x="246" y="212" width="1" height="1"/><rect x="246" y="184" width="1" height="1"/><rect x="275" y="726" width="1" height="1"/><rect x="275" y="698" width="1" height="1"/><rect x="275" y="669" width="1" height="1"/><rect x="275" y="641" width="1" height="1"/><rect x="275" y="612" width="1" height="1"/><rect x="275" y="584" width="1" height="1"/><rect x="275" y="555" width="1" height="1"/><rect x="275" y="526" width="1" height="1"/><rect x="275" y="498" width="1" height="1"/><rect x="275" y="469" width="1" height="1"/><rect x="275" y="441" width="1" height="1"/><rect x="275" y="412" width="1" height="1"/><rect x="275" y="384" width="1" height="1"/><rect x="275" y="355" width="1" height="1"/><rect x="275" y="326" width="1" height="1"/><rect x="275" y="298" width="1" height="1"/><rect x="275" y="269" width="1" height="1"/><rect x="275" y="241" width="1" height="1"/><rect x="275" y="212" width="1" height="1"/><rect x="275" y="184" width="1" height="1"/><rect x="303" y="726" width="1" height="1"/><rect x="303" y="698" width="1" height="1"/><rect x="303" y="669" width="1" height="1"/><rect x="303" y="641" width="1" height="1"/><rect x="303" y="612" width="1" height="1"/><rect x="303" y="584" width="1" height="1"/><rect x="303" y="555" width="1" height="1"/><rect x="303" y="526" width="1" height="1"/><rect x="303" y="498" width="1" height="1"/><rect x="303" y="469" width="1" height="1"/><rect x="303" y="441" width="1" height="1"/><rect x="303" y="412" width="1" height="1"/><rect x="303" y="384" width="1" height="1"/><rect x="303" y="355" width="1" height="1"/><rect x="303" y="326" width="1" height="1"/><rect x="303" y="298" width="1" height="1"/><rect x="303" y="269" width="1" height="1"/><rect x="303" y="241" width="1" height="1"/><rect x="303" y="212" width="1" height="1"/><rect x="303" y="184" width="1" height="1"/><rect x="332" y="726" width="1" height="1"/><rect x="332" y="698" width="1" height="1"/><rect x="332" y="669" width="1" height="1"/><rect x="332" y="641" width="1" height="1"/><rect x="332" y="612" width="1" height="1"/><rect x="332" y="584" width="1" height="1"/><rect x="332" y="555" width="1" height="1"/><rect x="332" y="526" width="1" height="1"/><rect x="332" y="498" width="1" height="1"/><rect x="332" y="469" width="1" height="1"/><rect x="332" y="441" width="1" height="1"/><rect x="332" y="412" width="1" height="1"/><rect x="332" y="384" width="1" height="1"/><rect x="332" y="355" width="1" height="1"/><rect x="332" y="326" width="1" height="1"/><rect x="332" y="298" width="1" height="1"/><rect x="332" y="269" width="1" height="1"/><rect x="332" y="241" width="1" height="1"/><rect x="332" y="212" width="1" height="1"/><rect x="332" y="184" width="1" height="1"/><rect x="360" y="726" width="1" height="1"/><rect x="360" y="698" width="1" height="1"/><rect x="360" y="669" width="1" height="1"/><rect x="360" y="641" width="1" height="1"/><rect x="360" y="612" width="1" height="1"/><rect x="360" y="584" width="1" height="1"/><rect x="360" y="555" width="1" height="1"/><rect x="360" y="526" width="1" height="1"/><rect x="360" y="498" width="1" height="1"/><rect x="360" y="469" width="1" height="1"/><rect x="360" y="441" width="1" height="1"/><rect x="360" y="412" width="1" height="1"/><rect x="360" y="384" width="1" height="1"/><rect x="360" y="355" width="1" height="1"/><rect x="360" y="326" width="1" height="1"/><rect x="360" y="298" width="1" height="1"/><rect x="360" y="269" width="1" height="1"/><rect x="360" y="241" width="1" height="1"/><rect x="360" y="212" width="1" height="1"/><rect x="360" y="184" width="1" height="1"/><rect x="389" y="726" width="1" height="1"/><rect x="389" y="698" width="1" height="1"/><rect x="389" y="669" width="1" height="1"/><rect x="389" y="641" width="1" height="1"/><rect x="389" y="612" width="1" height="1"/><rect x="389" y="584" width="1" height="1"/><rect x="389" y="555" width="1" height="1"/><rect x="389" y="526" width="1" height="1"/><rect x="389" y="498" width="1" height="1"/><rect x="389" y="469" width="1" height="1"/><rect x="389" y="441" width="1" height="1"/><rect x="389" y="412" width="1" height="1"/><rect x="389" y="384" width="1" height="1"/><rect x="389" y="355" width="1" height="1"/><rect x="389" y="326" width="1" height="1"/><rect x="389" y="298" width="1" height="1"/><rect x="389" y="269" width="1" height="1"/><rect x="389" y="241" width="1" height="1"/><rect x="389" y="212" width="1" height="1"/><rect x="389" y="184" width="1" height="1"/><rect x="418" y="726" width="1" height="1"/><rect x="418" y="698" width="1" height="1"/><rect x="418" y="669" width="1" height="1"/><rect x="418" y="641" width="1" height="1"/><rect x="418" y="612" width="1" height="1"/><rect x="418" y="584" width="1" height="1"/><rect x="418" y="555" width="1" height="1"/><rect x="418" y="526" width="1" height="1"/><rect x="418" y="498" width="1" height="1"/><rect x="418" y="469" width="1" height="1"/><rect x="418" y="441" width="1" height="1"/><rect x="418" y="412" width="1" height="1"/><rect x="418" y="384" width="1" height="1"/><rect x="418" y="355" width="1" height="1"/><rect x="418" y="326" width="1" height="1"/><rect x="418" y="298" width="1" height="1"/><rect x="418" y="269" width="1" height="1"/><rect x="418" y="241" width="1" height="1"/><rect x="418" y="212" width="1" height="1"/><rect x="418" y="184" width="1" height="1"/><rect x="446" y="726" width="1" height="1"/><rect x="446" y="698" width="1" height="1"/><rect x="446" y="669" width="1" height="1"/><rect x="446" y="641" width="1" height="1"/><rect x="446" y="612" width="1" height="1"/><rect x="446" y="584" width="1" height="1"/><rect x="446" y="555" width="1" height="1"/><rect x="446" y="526" width="1" height="1"/><rect x="446" y="498" width="1" height="1"/><rect x="446" y="469" width="1" height="1"/><rect x="446" y="441" width="1" height="1"/><rect x="446" y="412" width="1" height="1"/><rect x="446" y="384" width="1" height="1"/><rect x="446" y="355" width="1" height="1"/><rect x="446" y="326" width="1" height="1"/><rect x="446" y="298" width="1" height="1"/><rect x="446" y="269" width="1" height="1"/><rect x="446" y="241" width="1" height="1"/><rect x="446" y="212" width="1" height="1"/><rect x="446" y="184" width="1" height="1"/><rect x="475" y="726" width="1" height="1"/><rect x="475" y="698" width="1" height="1"/><rect x="475" y="669" width="1" height="1"/><rect x="475" y="641" width="1" height="1"/><rect x="475" y="612" width="1" height="1"/><rect x="475" y="584" width="1" height="1"/><rect x="475" y="555" width="1" height="1"/><rect x="475" y="526" width="1" height="1"/><rect x="475" y="498" width="1" height="1"/><rect x="475" y="469" width="1" height="1"/><rect x="475" y="441" width="1" height="1"/><rect x="475" y="412" width="1" height="1"/><rect x="475" y="384" width="1" height="1"/><rect x="475" y="355" width="1" height="1"/><rect x="475" y="326" width="1" height="1"/><rect x="475" y="298" width="1" height="1"/><rect x="475" y="269" width="1" height="1"/><rect x="475" y="241" width="1" height="1"/><rect x="475" y="212" width="1" height="1"/><rect x="475" y="184" width="1" height="1"/><rect x="503" y="726" width="1" height="1"/><rect x="503" y="698" width="1" height="1"/><rect x="503" y="669" width="1" height="1"/><rect x="503" y="641" width="1" height="1"/><rect x="503" y="612" width="1" height="1"/><rect x="503" y="584" width="1" height="1"/><rect x="503" y="555" width="1" height="1"/><rect x="503" y="526" width="1" height="1"/><rect x="503" y="498" width="1" height="1"/><rect x="503" y="469" width="1" height="1"/><rect x="503" y="441" width="1" height="1"/><rect x="503" y="412" width="1" height="1"/><rect x="503" y="384" width="1" height="1"/><rect x="503" y="355" width="1" height="1"/><rect x="503" y="326" width="1" height="1"/><rect x="503" y="298" width="1" height="1"/><rect x="503" y="269" width="1" height="1"/><rect x="503" y="241" width="1" height="1"/><rect x="503" y="212" width="1" height="1"/><rect x="503" y="184" width="1" height="1"/><rect x="532" y="726" width="1" height="1"/><rect x="532" y="698" width="1" height="1"/><rect x="532" y="669" width="1" height="1"/><rect x="532" y="641" width="1" height="1"/><rect x="532" y="612" width="1" height="1"/><rect x="532" y="584" width="1" height="1"/><rect x="532" y="555" width="1" height="1"/><rect x="532" y="526" width="1" height="1"/><rect x="532" y="498" width="1" height="1"/><rect x="532" y="469" width="1" height="1"/><rect x="532" y="441" width="1" height="1"/><rect x="532" y="412" width="1" height="1"/><rect x="532" y="384" width="1" height="1"/><rect x="532" y="355" width="1" height="1"/><rect x="532" y="326" width="1" height="1"/><rect x="532" y="298" width="1" height="1"/><rect x="532" y="269" width="1" height="1"/><rect x="532" y="241" width="1" height="1"/><rect x="532" y="212" width="1" height="1"/><rect x="532" y="184" width="1" height="1"/><rect x="560" y="726" width="1" height="1"/><rect x="560" y="698" width="1" height="1"/><rect x="560" y="669" width="1" height="1"/><rect x="560" y="641" width="1" height="1"/><rect x="560" y="612" width="1" height="1"/><rect x="560" y="584" width="1" height="1"/><rect x="560" y="555" width="1" height="1"/><rect x="560" y="526" width="1" height="1"/><rect x="560" y="498" width="1" height="1"/><rect x="560" y="469" width="1" height="1"/><rect x="560" y="441" width="1" height="1"/><rect x="560" y="412" width="1" height="1"/><rect x="560" y="384" width="1" height="1"/><rect x="560" y="355" width="1" height="1"/><rect x="560" y="326" width="1" height="1"/><rect x="560" y="298" width="1" height="1"/><rect x="560" y="269" width="1" height="1"/><rect x="560" y="241" width="1" height="1"/><rect x="560" y="212" width="1" height="1"/><rect x="560" y="184" width="1" height="1"/><rect x="589" y="726" width="1" height="1"/><rect x="589" y="698" width="1" height="1"/><rect x="589" y="669" width="1" height="1"/><rect x="589" y="641" width="1" height="1"/><rect x="589" y="612" width="1" height="1"/><rect x="589" y="584" width="1" height="1"/><rect x="589" y="555" width="1" height="1"/><rect x="589" y="526" width="1" height="1"/><rect x="589" y="498" width="1" height="1"/><rect x="589" y="469" width="1" height="1"/><rect x="589" y="441" width="1" height="1"/><rect x="589" y="412" width="1" height="1"/><rect x="589" y="384" width="1" height="1"/><rect x="589" y="355" width="1" height="1"/><rect x="589" y="326" width="1" height="1"/><rect x="589" y="298" width="1" height="1"/><rect x="589" y="269" width="1" height="1"/><rect x="589" y="241" width="1" height="1"/><rect x="589" y="212" width="1" height="1"/><rect x="589" y="184" width="1" height="1"/><rect x="618" y="726" width="1" height="1"/><rect x="618" y="698" width="1" height="1"/><rect x="618" y="669" width="1" height="1"/><rect x="618" y="641" width="1" height="1"/><rect x="618" y="612" width="1" height="1"/><rect x="618" y="584" width="1" height="1"/><rect x="618" y="555" width="1" height="1"/><rect x="618" y="526" width="1" height="1"/><rect x="618" y="498" width="1" height="1"/><rect x="618" y="469" width="1" height="1"/><rect x="618" y="441" width="1" height="1"/><rect x="618" y="412" width="1" height="1"/><rect x="618" y="384" width="1" height="1"/><rect x="618" y="355" width="1" height="1"/><rect x="618" y="326" width="1" height="1"/><rect x="618" y="298" width="1" height="1"/><rect x="618" y="269" width="1" height="1"/><rect x="618" y="241" width="1" height="1"/><rect x="618" y="212" width="1" height="1"/><rect x="618" y="184" width="1" height="1"/><rect x="646" y="726" width="1" height="1"/><rect x="646" y="698" width="1" height="1"/><rect x="646" y="669" width="1" height="1"/><rect x="646" y="641" width="1" height="1"/><rect x="646" y="612" width="1" height="1"/><rect x="646" y="584" width="1" height="1"/><rect x="646" y="555" width="1" height="1"/><rect x="646" y="526" width="1" height="1"/><rect x="646" y="498" width="1" height="1"/><rect x="646" y="469" width="1" height="1"/><rect x="646" y="441" width="1" height="1"/><rect x="646" y="412" width="1" height="1"/><rect x="646" y="384" width="1" height="1"/><rect x="646" y="355" width="1" height="1"/><rect x="646" y="326" width="1" height="1"/><rect x="646" y="298" width="1" height="1"/><rect x="646" y="269" width="1" height="1"/><rect x="646" y="241" width="1" height="1"/><rect x="646" y="212" width="1" height="1"/><rect x="646" y="184" width="1" height="1"/><rect x="675" y="726" width="1" height="1"/><rect x="675" y="698" width="1" height="1"/><rect x="675" y="669" width="1" height="1"/><rect x="675" y="641" width="1" height="1"/><rect x="675" y="612" width="1" height="1"/><rect x="675" y="584" width="1" height="1"/><rect x="675" y="555" width="1" height="1"/><rect x="675" y="526" width="1" height="1"/><rect x="675" y="498" width="1" height="1"/><rect x="675" y="469" width="1" height="1"/><rect x="675" y="441" width="1" height="1"/><rect x="675" y="412" width="1" height="1"/><rect x="675" y="384" width="1" height="1"/><rect x="675" y="355" width="1" height="1"/><rect x="675" y="326" width="1" height="1"/><rect x="675" y="298" width="1" height="1"/><rect x="675" y="269" width="1" height="1"/><rect x="675" y="241" width="1" height="1"/><rect x="675" y="212" width="1" height="1"/><rect x="675" y="184" width="1" height="1"/><rect x="703" y="726" width="1" height="1"/><rect x="703" y="698" width="1" height="1"/><rect x="703" y="669" width="1" height="1"/><rect x="703" y="641" width="1" height="1"/><rect x="703" y="612" width="1" height="1"/><rect x="703" y="584" width="1" height="1"/><rect x="703" y="555" width="1" height="1"/><rect x="703" y="526" width="1" height="1"/><rect x="703" y="498" width="1" height="1"/><rect x="703" y="469" width="1" height="1"/><rect x="703" y="441" width="1" height="1"/><rect x="703" y="412" width="1" height="1"/><rect x="703" y="384" width="1" height="1"/><rect x="703" y="355" width="1" height="1"/><rect x="703" y="326" width="1" height="1"/><rect x="703" y="298" width="1" height="1"/><rect x="703" y="269" width="1" height="1"/><rect x="703" y="241" width="1" height="1"/><rect x="703" y="212" width="1" height="1"/><rect x="703" y="184" width="1" height="1"/><rect x="732" y="726" width="1" height="1"/><rect x="732" y="698" width="1" height="1"/><rect x="732" y="669" width="1" height="1"/><rect x="732" y="641" width="1" height="1"/><rect x="732" y="612" width="1" height="1"/><rect x="732" y="584" width="1" height="1"/><rect x="732" y="555" width="1" height="1"/><rect x="732" y="526" width="1" height="1"/><rect x="732" y="498" width="1" height="1"/><rect x="732" y="469" width="1" height="1"/><rect x="732" y="441" width="1" height="1"/><rect x="732" y="412" width="1" height="1"/><rect x="732" y="384" width="1" height="1"/><rect x="732" y="355" width="1" height="1"/><rect x="732" y="326" width="1" height="1"/><rect x="732" y="298" width="1" height="1"/><rect x="732" y="269" width="1" height="1"/><rect x="732" y="241" width="1" height="1"/><rect x="732" y="212" width="1" height="1"/><rect x="732" y="184" width="1" height="1"/><rect x="761" y="726" width="1" height="1"/><rect x="761" y="698" width="1" height="1"/><rect x="761" y="669" width="1" height="1"/><rect x="761" y="641" width="1" height="1"/><rect x="761" y="612" width="1" height="1"/><rect x="761" y="584" width="1" height="1"/><rect x="761" y="555" width="1" height="1"/><rect x="761" y="526" width="1" height="1"/><rect x="761" y="498" width="1" height="1"/><rect x="761" y="469" width="1" height="1"/><rect x="761" y="441" width="1" height="1"/><rect x="761" y="412" width="1" height="1"/><rect x="761" y="384" width="1" height="1"/><rect x="761" y="355" width="1" height="1"/><rect x="761" y="326" width="1" height="1"/><rect x="761" y="298" width="1" height="1"/><rect x="761" y="269" width="1" height="1"/><rect x="761" y="241" width="1" height="1"/><rect x="761" y="212" width="1" height="1"/><rect x="761" y="184" width="1" height="1"/><rect x="789" y="726" width="1" height="1"/><rect x="789" y="698" width="1" height="1"/><rect x="789" y="669" width="1" height="1"/><rect x="789" y="641" width="1" height="1"/><rect x="789" y="612" width="1" height="1"/><rect x="789" y="584" width="1" height="1"/><rect x="789" y="555" width="1" height="1"/><rect x="789" y="526" width="1" height="1"/><rect x="789" y="498" width="1" height="1"/><rect x="789" y="469" width="1" height="1"/><rect x="789" y="441" width="1" height="1"/><rect x="789" y="412" width="1" height="1"/><rect x="789" y="384" width="1" height="1"/><rect x="789" y="355" width="1" height="1"/><rect x="789" y="326" width="1" height="1"/><rect x="789" y="298" width="1" height="1"/><rect x="789" y="269" width="1" height="1"/><rect x="789" y="241" width="1" height="1"/><rect x="789" y="212" width="1" height="1"/><rect x="789" y="184" width="1" height="1"/><rect x="818" y="726" width="1" height="1"/><rect x="818" y="698" width="1" height="1"/><rect x="818" y="669" width="1" height="1"/><rect x="818" y="641" width="1" height="1"/><rect x="818" y="612" width="1" height="1"/><rect x="818" y="584" width="1" height="1"/><rect x="818" y="555" width="1" height="1"/><rect x="818" y="526" width="1" height="1"/><rect x="818" y="498" width="1" height="1"/><rect x="818" y="469" width="1" height="1"/><rect x="818" y="441" width="1" height="1"/><rect x="818" y="412" width="1" height="1"/><rect x="818" y="384" width="1" height="1"/><rect x="818" y="355" width="1" height="1"/><rect x="818" y="326" width="1" height="1"/><rect x="818" y="298" width="1" height="1"/><rect x="818" y="269" width="1" height="1"/><rect x="818" y="241" width="1" height="1"/><rect x="818" y="212" width="1" height="1"/><rect x="818" y="184" width="1" height="1"/><rect x="846" y="726" width="1" height="1"/><rect x="846" y="698" width="1" height="1"/><rect x="846" y="669" width="1" height="1"/><rect x="846" y="641" width="1" height="1"/><rect x="846" y="612" width="1" height="1"/><rect x="846" y="584" width="1" height="1"/><rect x="846" y="555" width="1" height="1"/><rect x="846" y="526" width="1" height="1"/><rect x="846" y="498" width="1" height="1"/><rect x="846" y="469" width="1" height="1"/><rect x="846" y="441" width="1" height="1"/><rect x="846" y="412" width="1" height="1"/><rect x="846" y="384" width="1" height="1"/><rect x="846" y="355" width="1" height="1"/><rect x="846" y="326" width="1" height="1"/><rect x="846" y="298" width="1" height="1"/><rect x="846" y="269" width="1" height="1"/><rect x="846" y="241" width="1" height="1"/><rect x="846" y="212" width="1" height="1"/><rect x="846" y="184" width="1" height="1"/><rect x="875" y="726" width="1" height="1"/><rect x="875" y="698" width="1" height="1"/><rect x="875" y="669" width="1" height="1"/><rect x="875" y="641" width="1" height="1"/><rect x="875" y="612" width="1" height="1"/><rect x="875" y="584" width="1" height="1"/><rect x="875" y="555" width="1" height="1"/><rect x="875" y="526" width="1" height="1"/><rect x="875" y="498" width="1" height="1"/><rect x="875" y="469" width="1" height="1"/><rect x="875" y="441" width="1" height="1"/><rect x="875" y="412" width="1" height="1"/><rect x="875" y="384" width="1" height="1"/><rect x="875" y="355" width="1" height="1"/><rect x="875" y="326" width="1" height="1"/><rect x="875" y="298" width="1" height="1"/><rect x="875" y="269" width="1" height="1"/><rect x="875" y="241" width="1" height="1"/><rect x="875" y="212" width="1" height="1"/><rect x="875" y="184" width="1" height="1"/><rect x="903" y="726" width="1" height="1"/><rect x="903" y="698" width="1" height="1"/><rect x="903" y="669" width="1" height="1"/><rect x="903" y="641" width="1" height="1"/><rect x="903" y="612" width="1" height="1"/><rect x="903" y="584" width="1" height="1"/><rect x="903" y="555" width="1" height="1"/><rect x="903" y="526" width="1" height="1"/><rect x="903" y="498" width="1" height="1"/><rect x="903" y="469" width="1" height="1"/><rect x="903" y="441" width="1" height="1"/><rect x="903" y="412" width="1" height="1"/><rect x="903" y="384" width="1" height="1"/><rect x="903" y="355" width="1" height="1"/><rect x="903" y="326" width="1" height="1"/><rect x="903" y="298" width="1" height="1"/><rect x="903" y="269" width="1" height="1"/><rect x="903" y="241" width="1" height="1"/><rect x="903" y="212" width="1" height="1"/><rect x="903" y="184" width="1" height="1"/><rect x="932" y="726" width="1" height="1"/><rect x="932" y="698" width="1" height="1"/><rect x="932" y="669" width="1" height="1"/><rect x="932" y="641" width="1" height="1"/><rect x="932" y="612" width="1" height="1"/><rect x="932" y="584" width="1" height="1"/><rect x="932" y="555" width="1" height="1"/><rect x="932" y="526" width="1" height="1"/><rect x="932" y="498" width="1" height="1"/><rect x="932" y="469" width="1" height="1"/><rect x="932" y="441" width="1" height="1"/><rect x="932" y="412" width="1" height="1"/><rect x="932" y="384" width="1" height="1"/><rect x="932" y="355" width="1" height="1"/><rect x="932" y="326" width="1" height="1"/><rect x="932" y="298" width="1" height="1"/><rect x="932" y="269" width="1" height="1"/><rect x="932" y="241" width="1" height="1"/><rect x="932" y="212" width="1" height="1"/><rect x="932" y="184" width="1" height="1"/><rect x="961" y="726" width="1" height="1"/><rect x="961" y="698" width="1" height="1"/><rect x="961" y="669" width="1" height="1"/><rect x="961" y="641" width="1" height="1"/><rect x="961" y="612" width="1" height="1"/><rect x="961" y="584" width="1" height="1"/><rect x="961" y="555" width="1" height="1"/><rect x="961" y="526" width="1" height="1"/><rect x="961" y="498" width="1" height="1"/><rect x="961" y="469" width="1" height="1"/><rect x="961" y="441" width="1" height="1"/><rect x="961" y="412" width="1" height="1"/><rect x="961" y="384" width="1" height="1"/><rect x="961" y="355" width="1" height="1"/><rect x="961" y="326" width="1" height="1"/><rect x="961" y="298" width="1" height="1"/><rect x="961" y="269" width="1" height="1"/><rect x="961" y="241" width="1" height="1"/><rect x="961" y="212" width="1" height="1"/><rect x="961" y="184" width="1" height="1"/><rect x="989" y="726" width="1" height="1"/><rect x="989" y="698" width="1" height="1"/><rect x="989" y="669" width="1" height="1"/><rect x="989" y="641" width="1" height="1"/><rect x="989" y="612" width="1" height="1"/><rect x="989" y="584" width="1" height="1"/><rect x="989" y="555" width="1" height="1"/><rect x="989" y="526" width="1" height="1"/><rect x="989" y="498" width="1" height="1"/><rect x="989" y="469" width="1" height="1"/><rect x="989" y="441" width="1" height="1"/><rect x="989" y="412" width="1" height="1"/><rect x="989" y="384" width="1" height="1"/><rect x="989" y="355" width="1" height="1"/><rect x="989" y="326" width="1" height="1"/><rect x="989" y="298" width="1" height="1"/><rect x="989" y="269" width="1" height="1"/><rect x="989" y="241" width="1" height="1"/><rect x="989" y="212" width="1" height="1"/><rect x="989" y="184" width="1" height="1"/><rect x="1018" y="726" width="1" height="1"/><rect x="1018" y="698" width="1" height="1"/><rect x="1018" y="669" width="1" height="1"/><rect x="1018" y="641" width="1" height="1"/><rect x="1018" y="612" width="1" height="1"/><rect x="1018" y="584" width="1" height="1"/><rect x="1018" y="555" width="1" height="1"/><rect x="1018" y="526" width="1" height="1"/><rect x="1018" y="498" width="1" height="1"/><rect x="1018" y="469" width="1" height="1"/><rect x="1018" y="441" width="1" height="1"/><rect x="1018" y="412" width="1" height="1"/><rect x="1018" y="384" width="1" height="1"/><rect x="1018" y="355" width="1" height="1"/><rect x="1018" y="326" width="1" height="1"/><rect x="1018" y="298" width="1" height="1"/><rect x="1018" y="269" width="1" height="1"/><rect x="1018" y="241" width="1" height="1"/><rect x="1018" y="212" width="1" height="1"/><rect x="1018" y="184" width="1" height="1"/><rect x="1046" y="726" width="1" height="1"/><rect x="1046" y="698" width="1" height="1"/><rect x="1046" y="669" width="1" height="1"/><rect x="1046" y="641" width="1" height="1"/><rect x="1046" y="612" width="1" height="1"/><rect x="1046" y="584" width="1" height="1"/><rect x="1046" y="555" width="1" height="1"/><rect x="1046" y="526" width="1" height="1"/><rect x="1046" y="498" width="1" height="1"/><rect x="1046" y="469" width="1" height="1"/><rect x="1046" y="441" width="1" height="1"/><rect x="1046" y="412" width="1" height="1"/><rect x="1046" y="384" width="1" height="1"/><rect x="1046" y="355" width="1" height="1"/><rect x="1046" y="326" width="1" height="1"/><rect x="1046" y="298" width="1" height="1"/><rect x="1046" y="269" width="1" height="1"/><rect x="1046" y="241" width="1" height="1"/><rect x="1046" y="212" width="1" height="1"/><rect x="1046" y="184" width="1" height="1"/><rect x="1075" y="726" width="1" height="1"/><rect x="1075" y="698" width="1" height="1"/><rect x="1075" y="669" width="1" height="1"/><rect x="1075" y="641" width="1" height="1"/><rect x="1075" y="612" width="1" height="1"/><rect x="1075" y="584" width="1" height="1"/><rect x="1075" y="555" width="1" height="1"/><rect x="1075" y="526" width="1" height="1"/><rect x="1075" y="498" width="1" height="1"/><rect x="1075" y="469" width="1" height="1"/><rect x="1075" y="441" width="1" height="1"/><rect x="1075" y="412" width="1" height="1"/><rect x="1075" y="384" width="1" height="1"/><rect x="1075" y="355" width="1" height="1"/><rect x="1075" y="326" width="1" height="1"/><rect x="1075" y="298" width="1" height="1"/><rect x="1075" y="269" width="1" height="1"/><rect x="1075" y="241" width="1" height="1"/><rect x="1075" y="212" width="1" height="1"/><rect x="1075" y="184" width="1" height="1"/><rect x="1103" y="726" width="1" height="1"/><rect x="1103" y="698" width="1" height="1"/><rect x="1103" y="669" width="1" height="1"/><rect x="1103" y="641" width="1" height="1"/><rect x="1103" y="612" width="1" height="1"/><rect x="1103" y="584" width="1" height="1"/><rect x="1103" y="555" width="1" height="1"/><rect x="1103" y="526" width="1" height="1"/><rect x="1103" y="498" width="1" height="1"/><rect x="1103" y="469" width="1" height="1"/><rect x="1103" y="441" width="1" height="1"/><rect x="1103" y="412" width="1" height="1"/><rect x="1103" y="384" width="1" height="1"/><rect x="1103" y="355" width="1" height="1"/><rect x="1103" y="326" width="1" height="1"/><rect x="1103" y="298" width="1" height="1"/><rect x="1103" y="269" width="1" height="1"/><rect x="1103" y="241" width="1" height="1"/><rect x="1103" y="212" width="1" height="1"/><rect x="1103" y="184" width="1" height="1"/><rect x="1132" y="726" width="1" height="1"/><rect x="1132" y="698" width="1" height="1"/><rect x="1132" y="669" width="1" height="1"/><rect x="1132" y="641" width="1" height="1"/><rect x="1132" y="612" width="1" height="1"/><rect x="1132" y="584" width="1" height="1"/><rect x="1132" y="555" width="1" height="1"/><rect x="1132" y="526" width="1" height="1"/><rect x="1132" y="498" width="1" height="1"/><rect x="1132" y="469" width="1" height="1"/><rect x="1132" y="441" width="1" height="1"/><rect x="1132" y="412" width="1" height="1"/><rect x="1132" y="384" width="1" height="1"/><rect x="1132" y="355" width="1" height="1"/><rect x="1132" y="326" width="1" height="1"/><rect x="1132" y="298" width="1" height="1"/><rect x="1132" y="269" width="1" height="1"/><rect x="1132" y="241" width="1" height="1"/><rect x="1132" y="212" width="1" height="1"/><rect x="1132" y="184" width="1" height="1"/></g></svg>









<!-- MAP --><svg class="a" style="left:95px;top:170px" width="1044" height="562" viewBox="95 170 1044 562"><defs><clipPath id="mc"><rect x="333" y="268" width="567" height="352"/></clipPath></defs><g clip-path="url(#mc)" fill="none" stroke-width="1" stroke-linejoin="round"><g stroke="#d6d6d6"><polyline points="360.7,269.7 358.6,286.2 369.7,287.4"/><polyline points="332.4,290.5 343.5,291.3 349.7,291.3 350.9,285.6 358.6,286.2"/><polyline points="332.4,297.4 338.6,298.5 337.6,307.9"/><polyline points="332.4,307.9 389.7,313.6 421.3,316.2"/><polyline points="346.6,299.8 345.8,308.2"/><polyline points="346.6,299.8 432.9,308.2 437.5,310.5 440.6,316.7"/><polyline points="421.3,316.2 409.4,354.4 395.9,392.0"/><polyline points="398.2,346.0 410.5,350.6"/><polyline points="398.2,346.0 383.6,385.3 395.9,389.9"/><polyline points="384.3,354.4 407.4,357.5"/><polyline points="380.5,385.3 384.3,354.4"/><polyline points="391.3,368.3 402.0,372.2"/><polyline points="332.4,379.1 380.5,385.3"/><polyline points="409.4,354.4 423.6,363.7"/><polyline points="485.2,279.7 496.8,280.8 492.2,306.7 479.1,305.9"/><polyline points="484.5,288.2 494.5,289.7"/><polyline points="497.6,269.7 502.2,270.5"/><polyline points="510.7,269.7 509.9,273.6 525.0,275.1"/><polyline points="525.0,281.3 509.9,280.2 507.6,301.3 525.0,303.6"/><polyline points="525.0,308.2 505.3,306.7 503.7,319.0"/><polyline points="472.9,320.6 471.4,333.6"/><polyline points="467.5,334.4 525.0,339.8"/><polyline points="467.5,337.5 525.0,343.7"/><polyline points="462.1,337.5 459.8,354.4"/><polyline points="466.8,337.5 464.4,354.4"/><polyline points="461.2,340.6 465.8,342.1"/><polyline points="460.9,343.7 465.5,345.2"/><polyline points="460.6,346.7 465.2,348.3"/><polyline points="460.3,349.8 464.9,351.4"/><polyline points="435.9,346.0 449.8,340.6 453.7,335.7 462.9,336.7"/><polyline points="447.5,353.7 446.0,364.5 444.4,364.5 442.9,378.3"/><polyline points="447.5,353.7 485.2,357.5 482.9,384.5"/><polyline points="432.9,377.6 476.8,383.7 525.0,389.9"/><polyline points="432.9,377.6 431.3,392.0"/><polyline points="518.4,362.2 525.0,361.8"/><polyline points="518.4,362.2 516.1,369.9 514.5,371.4 512.2,392.0"/><polyline points="476.8,383.7 476.0,392.0"/><polyline points="503.0,386.8 502.2,392.0"/><polyline points="510.4,269.7 510.4,272.8 592.1,283.6 599.8,277.4 600.5,269.7"/><polyline points="509.6,280.5 589.7,289.7 599.0,299.0 599.0,301.3 604.4,301.8 603.6,310.5"/><polyline points="509.6,280.5 507.3,301.3 566.6,309.0 597.4,313.6 597.4,318.2 568.2,315.2 567.4,312.8 505.0,306.7"/><polyline points="607.5,269.7 607.5,273.6 615.9,274.3 615.9,285.1 623.6,285.9 622.9,295.9 631.3,297.1 640.0,296.8"/><polyline points="612.9,302.8 631.3,304.4 640.0,305.0"/><polyline points="612.9,302.8 612.1,310.5"/><polyline points="602.8,310.5 619.0,312.1 618.3,326.7 601.3,324.9 602.8,310.5"/><polyline points="535.8,327.5 534.3,341.4"/><polyline points="535.8,327.5 584.4,332.9 582.0,357.5 558.2,354.4 558.2,348.3 505.0,341.4"/><polyline points="505.0,338.3 651.4,355.2 646.8,392.0"/><polyline points="518.1,361.4 554.3,366.0 551.2,392.0"/><polyline points="518.1,361.4 516.6,372.2 514.2,372.9 511.9,386.8"/><polyline points="505.0,386.0 546.6,392.0"/><polyline points="586.7,369.9 624.4,374.5 622.1,392.0"/><polyline points="586.7,369.9 585.1,380.6 583.6,381.4 582.0,392.0"/><polyline points="631.3,392.0 632.1,386.8 647.5,388.3"/><polyline points="676.8,365.2 705.0,368.3"/><polyline points="676.8,365.2 673.7,392.0"/><polyline points="777.4,336.6 814.7,339.1 816.4,333.2 829.9,334.5 834.2,339.1"/><polyline points="817.2,292.5 834.2,294.2 829.9,334.0"/><polyline points="817.2,292.5 816.9,308.6 815.5,310.3 819.7,311.2 817.2,333.2"/><polyline points="785.0,351.0 838.4,353.5 835.8,382.3 782.5,378.1 785.0,351.0"/><polyline points="800.3,352.7 801.6,348.1 810.4,349.3 809.6,354.4"/><polyline points="685.0,366.2 737.5,371.8 734.2,405.1"/><polyline points="685.0,395.9 708.7,398.4 709.6,396.7 715.5,397.6 714.7,401.8 723.1,401.0 724.0,398.9 733.3,400.1"/><polyline points="857.0,285.7 881.6,287.8 879.1,313.7 854.5,311.2 857.0,285.7"/><polyline points="868.1,285.7 868.9,279.8 896.0,282.3"/><polyline points="881.6,285.7 893.5,285.7"/><polyline points="879.1,307.8 884.2,310.3 883.3,321.3 869.7,319.6 870.6,312.8"/><polyline points="863.8,312.8 863.0,325.6 876.5,327.3 875.7,330.6 885.8,338.3 889.2,345.1"/><polyline points="884.2,315.4 892.6,312.0"/><polyline points="891.8,269.6 897.7,271.3 896.0,277.3"/><polyline points="895.2,282.3 898.6,288.3"/><polyline points="853.6,358.6 849.4,386.6 874.0,389.1 875.7,386.6 885.8,387.4 888.4,343.4"/><polyline points="853.6,358.6 863.0,357.8 878.2,359.5 883.3,359.5 888.4,355.2"/><polyline points="863.0,357.8 862.1,367.1 877.4,368.8 874.0,389.1"/><polyline points="378.9,385.0 394.3,388.9 397.4,385.0"/><polyline points="397.4,385.0 392.8,398.1 392.0,411.2"/><polyline points="348.9,407.3 392.0,411.2"/><polyline points="348.9,407.3 348.1,413.5 379.7,416.6 376.6,451.3 396.6,453.6"/><polyline points="348.1,413.5 345.8,438.9 376.6,442.8"/><polyline points="354.3,440.5 353.5,447.4 368.1,448.2 368.9,442.0"/><polyline points="425.2,391.9 422.1,416.6 470.6,421.2 469.8,429.7"/><polyline points="425.2,391.9 431.3,392.7 430.5,418.1"/><polyline points="476.0,385.0 471.4,421.2"/><polyline points="476.8,388.9 491.4,390.4 489.9,398.9 485.2,398.9 481.4,431.2 517.6,435.8"/><polyline points="476.8,388.9 480.6,395.0 476.0,430.5"/><polyline points="503.0,386.5 499.9,422.0 520.7,425.1"/><polyline points="494.5,400.4 500.7,401.2"/><polyline points="494.5,400.4 491.4,424.3 500.7,425.8"/><polyline points="488.3,385.0 512.2,386.5"/><polyline points="411.3,423.5 448.3,427.4 525.0,435.8"/><polyline points="410.5,428.9 525.0,438.9"/><polyline points="405.1,462.0 419.8,462.8 421.3,465.9 486.0,469.4 488.3,482.8"/><polyline points="405.1,462.0 403.6,491.3 440.6,492.9 441.3,468.2"/><polyline points="332.7,487.5 386.6,495.9"/><polyline points="404.4,492.9 405.1,498.3 425.2,508.3 432.9,512.1"/><polyline points="426.7,504.4 442.1,504.4 439.8,509.0 425.2,509.8 426.7,504.4"/><polyline points="442.1,507.5 456.0,499.0 479.1,491.3 525.0,481.3"/><polyline points="505.0,386.5 615.9,400.4"/><polyline points="551.2,385.0 551.2,391.9"/><polyline points="583.6,385.0 582.0,394.2"/><polyline points="546.6,392.7 539.7,437.4 505.0,434.3"/><polyline points="505.0,426.6 522.7,428.1 523.5,427.4 541.2,429.7"/><polyline points="546.6,396.6 560.5,398.1 559.7,407.3 554.3,406.6 550.5,438.9 586.7,443.6 613.6,446.6 619.0,411.2"/><polyline points="572.8,394.2 615.9,400.4 611.3,437.4 592.1,435.8 591.3,437.4 569.7,434.3 572.8,394.2"/><polyline points="564.3,408.9 569.7,409.7"/><polyline points="564.3,408.9 561.2,432.8 569.7,433.5"/><polyline points="631.3,386.5 647.5,388.1 645.2,419.7 651.4,422.0 649.8,446.6"/><polyline points="631.3,386.5 628.3,418.9"/><polyline points="615.9,405.0 629.8,406.6"/><polyline points="674.5,385.0 670.6,422.8 705.0,427.4"/><polyline points="673.7,393.5 685.3,394.2 684.5,398.1 705.0,400.4"/><polyline points="505.0,438.9 612.9,452.8"/><polyline points="505.0,486.7 579.0,469.0 705.0,439.7"/><polyline points="543.5,491.3 548.9,508.3"/><polyline points="523.5,506.0 552.0,508.3 552.8,504.4 571.3,506.7 570.5,515.0"/><polyline points="523.5,506.0 522.7,515.0"/><polyline points="584.4,488.2 666.8,502.9"/><polyline points="592.1,501.3 622.1,503.6 620.6,515.0"/><polyline points="592.1,501.3 590.5,515.0"/><polyline points="611.3,492.9 608.2,515.0"/><polyline points="606.7,503.6 619.8,506.0"/><polyline points="666.8,503.6 666.0,515.0"/><polyline points="685.0,397.7 708.7,400.3 709.6,396.9 715.5,397.2 714.7,401.1 722.3,401.9 723.1,398.6 733.3,399.4"/><polyline points="735.8,385.0 732.5,425.7"/><polyline points="685.0,424.8 706.2,427.4 705.3,431.6"/><polyline points="685.0,442.6 766.4,425.7 803.6,422.3 837.5,423.1 893.5,428.2"/><polyline points="780.8,418.1 781.6,412.1 815.5,411.3 816.4,416.4"/><polyline points="763.8,385.0 759.6,421.4"/><polyline points="849.4,385.0 850.3,386.7 873.1,388.4 874.8,385.8 886.7,386.7 883.3,420.6"/><polyline points="714.7,451.1 723.1,453.6 721.4,463.8 740.9,465.5 742.6,459.6 774.0,462.1 775.7,452.8 800.3,454.5 796.0,480.8 793.5,490.1 746.9,486.7 713.0,485.0 711.3,464.7"/><polyline points="773.1,448.6 774.8,445.2 807.0,442.6 807.0,437.5"/><polyline points="759.6,461.3 756.2,486.7"/><polyline points="813.0,437.5 815.5,454.5 818.9,459.6 829.1,462.1"/><polyline points="823.1,437.5 824.8,450.3 829.9,452.8"/><polyline points="830.8,437.5 830.8,450.3"/><polyline points="838.4,437.5 837.5,448.6"/><polyline points="832.5,448.6 867.2,454.5 862.1,483.3 846.0,479.1 846.9,477.4 827.4,473.1 832.5,448.6"/><polyline points="887.5,449.4 898.6,450.3"/><polyline points="701.9,507.0 793.5,513.0 824.0,516.4"/><polyline points="715.5,513.8 713.8,528.1"/><polyline points="714.7,513.8 740.1,515.5 740.9,518.1 746.0,517.2 746.9,511.3 759.6,512.1"/><polyline points="772.3,513.8 774.0,518.1 803.6,522.3 824.0,517.2"/><polyline points="884.2,508.7 898.6,506.2"/><polyline points="898.6,483.3 893.5,486.7 897.7,490.9"/><polyline points="898.6,511.3 892.6,517.2 898.6,523.1"/><polyline points="405.1,500.0 411.3,503.1 431.3,511.6 434.4,510.8"/><polyline points="425.2,503.9 442.1,503.1 442.9,506.9 439.0,510.8 431.3,511.6 425.2,508.5 425.2,503.9"/><polyline points="443.6,506.9 454.4,500.0"/><polyline points="399.0,510.8 417.4,518.5 432.9,530.8 439.0,540.1 443.6,546.2"/><polyline points="448.3,568.6 454.4,561.6"/><polyline points="380.5,603.2 411.3,572.4 448.3,568.6"/><polyline points="380.5,603.2 377.4,618.6"/><polyline points="411.3,572.4 408.2,592.4 445.2,595.5 441.3,618.6 435.9,617.1 439.0,598.6 410.5,592.4"/><polyline points="408.2,592.4 405.9,618.6"/><polyline points="408.2,612.5 425.9,614.8 425.9,618.6"/><polyline points="446.7,618.6 451.3,590.9 460.6,580.9 469.8,581.7"/><polyline points="491.4,587.8 494.5,580.1 500.7,578.6 525.0,580.1"/><polyline points="523.0,506.2 520.7,531.6 525.0,532.4"/><polyline points="521.5,535.4 519.1,544.7 525.0,545.5"/><polyline points="524.3,505.4 572.0,506.2 569.7,523.9 559.7,523.1 557.4,535.4 521.2,530.8 524.3,505.4"/><polyline points="552.0,503.9 552.8,508.5 560.5,509.2 560.5,505.4"/><polyline points="547.4,500.0 548.9,506.9"/><polyline points="559.7,527.7 579.0,530.0"/><polyline points="520.4,535.4 535.8,537.0 534.3,546.2 518.9,543.9 520.4,535.4"/><polyline points="592.8,501.5 619.8,503.1 620.6,511.6 633.7,514.6 632.1,526.2 628.3,526.2 627.5,538.5 600.5,535.4 601.3,520.8 589.7,519.3 592.8,501.5"/><polyline points="606.7,503.1 605.9,511.6 620.6,512.3"/><polyline points="611.3,500.0 610.5,503.1"/><polyline points="624.4,500.0 622.9,512.3"/><polyline points="642.1,500.8 666.8,503.1 666.0,517.7 673.0,518.5 673.7,523.9 683.0,526.2 679.9,556.2 668.3,554.7 669.1,541.6 652.9,542.4 655.2,523.1 664.5,523.1 665.2,516.9"/><polyline points="674.5,524.7 698.4,527.0"/><polyline points="505.0,578.6 705.0,591.7"/><polyline points="634.4,587.8 639.1,596.3 640.6,603.2 690.7,606.3"/><polyline points="595.9,590.9 629.0,592.4 629.8,597.8 639.8,598.6 673.7,598.6 673.0,618.6"/><polyline points="667.6,604.8 666.0,618.6"/><polyline points="574.3,592.4 583.6,592.4 585.1,597.1 588.2,598.6 585.1,602.5 584.4,617.1 572.8,617.1 571.3,614.0 574.3,592.4"/><polyline points="595.9,590.9 594.4,605.5 589.0,605.5 587.4,617.1 608.2,618.6"/><polyline points="705.0,596.3 699.1,597.1 696.8,607.9 699.1,614.0 705.0,614.8"/><polyline points="703.0,507.7 702.2,526.2 705.0,527.0"/><polyline points="685.0,526.2 699.6,527.7"/><polyline points="703.5,506.2 701.2,527.0 709.7,528.5 708.1,543.1 734.3,545.5 735.1,540.8 752.8,542.4 753.6,537.0 756.6,537.0 759.0,520.8 746.6,519.3 747.4,511.6 760.5,512.3"/><polyline points="715.8,513.1 738.9,515.4 739.7,518.5 745.9,519.3"/><polyline points="715.8,513.1 714.3,528.5"/><polyline points="724.3,533.1 723.5,544.7"/><polyline points="724.3,533.1 756.6,536.2"/><polyline points="701.9,501.5 762.0,508.5 820.6,514.6 823.7,516.2"/><polyline points="772.8,513.1 823.7,516.2 820.6,545.5 831.4,547.0 830.6,556.2 840.6,557.0 841.4,552.4 855.3,553.9 856.0,548.5 869.1,549.3 868.4,557.0 875.3,558.6"/><polyline points="777.4,519.3 816.0,526.2 814.4,543.1 794.4,540.8 792.9,553.2 777.4,552.4 757.4,552.4"/><polyline points="777.4,519.3 775.1,532.4 770.5,533.1 768.2,552.4"/><polyline points="799.8,522.3 799.0,525.4 806.7,525.4 807.5,523.1"/><polyline points="826.8,532.4 834.5,532.4 832.9,545.5"/><polyline points="826.0,532.4 825.2,545.5"/><polyline points="836.8,525.4 876.1,530.0 874.5,549.3"/><polyline points="836.8,525.4 833.7,546.2"/><polyline points="860.7,528.5 861.4,531.6 867.6,532.4 868.4,530.0"/><polyline points="879.1,504.6 882.2,504.6 898.4,506.2"/><polyline points="897.6,511.6 892.2,516.9 898.4,523.1"/><polyline points="878.4,546.2 898.4,548.5"/><polyline points="896.9,561.6 885.3,567.8 897.6,580.9"/><polyline points="685.0,590.9 744.3,594.8 760.5,597.1 759.7,618.6"/><polyline points="744.3,594.8 744.3,604.8 760.5,606.3"/><polyline points="697.3,597.1 703.5,596.3 708.9,600.2 708.9,610.9 702.7,615.6 696.6,610.9 697.3,597.1"/><polyline points="724.3,618.6 732.8,604.8 744.3,604.8"/><polyline points="727.4,618.6 731.2,610.9"/><polyline points="780.5,588.6 777.4,618.6"/><polyline points="804.4,579.4 812.1,580.1 811.3,589.4 804.4,588.6 804.4,579.4"/><polyline points="685.0,606.3 691.2,606.3"/><polyline points="884.5,617.9 898.4,618.6"/><polyline points="640.0,297.5 649.7,294.2 669.0,279.3 661.4,269.3"/><polyline points="640.0,305.9 653.7,300.7 673.4,285.4 706.1,326.5 711.3,323.6 683.5,287.8 706.5,270.1"/><polyline points="669.4,269.7 671.8,272.5 674.6,270.5 681.5,279.7 694.0,270.1"/><polyline points="741.5,269.4 746.5,275.4 751.3,281.6 755.6,288.0 759.5,294.7 763.0,301.8 766.0,309.4 768.0,316.0 769.3,322.5 769.8,328.0 769.6,333.9 768.5,343.7 762.0,400.0"/><polyline points="747.3,269.4 751.8,274.6 756.2,280.0 760.4,285.6 764.4,291.4 767.9,297.8 770.9,304.5 773.0,311.5 774.5,319.2 775.3,325.0 775.5,330.6 775.8,338.8 777.5,336.8"/><circle cx="602.8" cy="287.4" r="5.4"/></g><g stroke="#10d0dc"><polyline points="372.0,269.7 369.7,294.4 449.8,302.1"/><polyline points="467.5,268.9 449.8,302.1 418.2,356.0 412.8,369.9 408.2,383.7 405.9,392.0"/><polyline points="525.0,322.1 494.5,319.0 456.0,315.2 452.9,318.2 442.1,334.4 429.8,357.5 422.1,372.9 416.7,392.0"/><polyline points="485.2,269.7 479.1,312.8"/><polyline points="505.0,319.8 628.3,333.6 663.7,337.5"/><polyline points="633.7,269.7 628.3,333.6"/><polyline points="664.5,329.8 705.0,333.6"/><polyline points="664.5,329.8 663.7,337.5 656.8,392.0"/><polyline points="685.0,331.5 768.1,340.8 759.6,405.1"/><polyline points="785.8,269.6 777.4,336.6 768.9,405.1"/><polyline points="842.6,269.6 834.2,339.1"/><polyline points="834.2,334.9 897.7,345.9"/><polyline points="843.5,336.6 836.7,405.1"/><polyline points="850.3,269.6 897.7,274.7 895.2,283.2 888.4,345.1 883.3,405.1"/><polyline points="897.7,338.3 891.8,405.1"/><polyline points="332.7,390.4 392.8,398.1 405.1,399.6"/><polyline points="392.8,398.1 392.0,411.2 402.8,412.7"/><polyline points="409.0,385.0 405.1,399.6 402.0,412.7 397.4,449.7 394.3,489.8 392.8,493.6 386.6,495.9 332.7,489.0"/><polyline points="418.2,385.0 413.6,407.3 410.5,429.7 405.1,471.3 404.4,492.9 408.2,498.3 439.0,498.3 466.8,488.2 525.0,475.9"/><polyline points="410.5,431.2 525.0,443.6"/><polyline points="332.7,499.8 391.3,510.6"/><polyline points="420.5,499.0 435.2,515.0"/><polyline points="460.6,515.0 477.5,507.5 525.0,495.9"/><polyline points="505.0,441.2 618.3,454.3"/><polyline points="505.0,480.5 618.3,454.3 705.0,433.5"/><polyline points="659.1,385.0 650.6,446.6"/><polyline points="505.0,499.8 564.3,486.7 584.4,482.1 607.5,481.8"/><polyline points="705.0,454.3 609.8,475.9 607.5,478.2 607.5,481.3 609.8,482.8 705.0,492.9"/><polyline points="584.4,482.1 582.0,515.0"/><polyline points="642.1,486.7 640.6,515.0"/><polyline points="703.0,492.9 700.7,515.0"/><polyline points="685.0,439.2 757.9,421.4 786.7,417.2 812.1,416.4 837.5,417.2 856.2,418.9 898.6,422.3"/><polyline points="685.0,458.7 756.2,442.6 786.7,436.7 810.4,435.8 847.7,438.4 898.6,443.5"/><polyline points="772.3,385.0 768.1,420.6"/><polyline points="839.2,385.0 835.8,417.2"/><polyline points="894.3,385.0 890.1,422.3"/><polyline points="810.4,435.8 803.6,503.6"/><polyline points="887.5,441.8 878.2,528.1"/><polyline points="685.0,490.9 761.3,499.4 803.6,503.6 879.9,512.1"/><polyline points="701.9,491.8 698.6,528.1"/><polyline points="761.3,499.4 759.6,528.1"/><polyline points="821.4,505.3 818.9,528.1"/><polyline points="879.9,521.4 898.6,524.0"/><polyline points="332.7,500.0 388.2,510.0 402.0,512.3 420.5,521.6 432.9,533.9 445.2,549.3 456.0,564.7 494.5,618.6"/><polyline points="420.5,500.0 454.4,534.7 511.4,618.6"/><polyline points="400.5,515.4 402.0,618.6"/><polyline points="476.8,567.8 525.0,571.6"/><polyline points="505.0,570.1 575.1,574.7 632.9,578.6 664.5,580.1 705.0,584.0"/><polyline points="582.8,500.0 575.1,574.7"/><polyline points="641.4,500.0 632.9,578.6"/><polyline points="702.2,500.0 693.8,582.4 689.9,618.6"/><polyline points="505.0,609.4 511.9,618.6"/><polyline points="701.2,500.0 690.4,618.6"/><polyline points="762.0,500.0 753.6,587.1"/><polyline points="765.1,500.0 803.6,503.1 821.4,506.2 879.1,512.3 898.4,513.1"/><polyline points="822.1,505.4 812.9,590.9"/><polyline points="881.5,500.0 869.1,618.6"/><polyline points="878.4,522.3 898.4,523.9"/><polyline points="873.0,579.4 898.4,580.9"/><polyline points="685.0,581.7 753.6,587.1 812.9,590.9 871.4,594.8"/><polyline points="785.9,588.6 782.8,618.6"/><polyline points="456.0,536.4 454.9,528.4 456.3,521.2 460.0,515.6 467.2,510.5 476.8,506.8 520.0,497.2"/></g></g><g fill="none" stroke="#ddd" stroke-width=".8"><circle cx="452.9" cy="313.6" r="1.6"/><circle cx="578.2" cy="469" r="1.6"/><circle cx="767.2" cy="425.7" r="1.6"/><circle cx="893.5" cy="428.2" r="1.6"/><circle cx="389.7" cy="507" r="1.6"/></g><g fill="none" stroke="#d2d200" stroke-width="0.95" stroke-linejoin="round"><g transform="translate(718.9 292.9)"><path transform="translate(0.00 0)" d="M3.1 6.1V0L0 4.2H3.9"/><path transform="translate(5.05 0)" d="M3.1 6.1V0L0 4.2H3.9"/><path transform="translate(10.10 0)" d="M3.9 0H0.2V2.7H2.9Q3.9 2.7 3.9 3.7V5.1Q3.9 6.1 2.9 6.1H0"/></g><g transform="translate(707.9 352.5)"><path transform="translate(0.00 0)" d="M0 1.1L1.4 0V6.1"/><path transform="translate(3.05 0)" d="M0.3 6.1H2.9Q3.9 6.1 3.9 5.1V1Q3.9 0 2.9 0H1Q0 0 0 1V2.2Q0 3.2 1 3.2H3.9"/><path transform="translate(8.10 0)" d="M0 0H2.9Q3.9 0 3.9 1V2Q3.9 3 2.9 3H1.4M2.9 3Q3.9 3 3.9 4V5.1Q3.9 6.1 2.9 6.1H0"/><path transform="translate(13.15 0)" d="M0 1.1L1.4 0V6.1"/></g><g transform="translate(841.8 320.79999999999995)"><path transform="translate(0.00 0)" d="M0 0H2.9Q3.9 0 3.9 1V2.1Q3.9 2.8 3.2 3.2L0 6.1H3.9"/><path transform="translate(5.05 0)" d="M0 0H2.9Q3.9 0 3.9 1V2Q3.9 3 2.9 3H1.4M2.9 3Q3.9 3 3.9 4V5.1Q3.9 6.1 2.9 6.1H0"/><path transform="translate(10.10 0)" d="M3.6 0H1Q0 0 0 1V5.1Q0 6.1 1 6.1H2.9Q3.9 6.1 3.9 5.1V3.9Q3.9 2.9 2.9 2.9H0"/><path transform="translate(15.15 0)" d="M1 0H2.9Q3.9 0 3.9 1V5.1Q3.9 6.1 2.9 6.1H1Q0 6.1 0 5.1V1Q0 0 1 0Z"/></g><g transform="translate(641.9 345.0)"><path transform="translate(0.00 0)" d="M3.9 0H0.2V2.7H2.9Q3.9 2.7 3.9 3.7V5.1Q3.9 6.1 2.9 6.1H0"/><path transform="translate(5.05 0)" d="M3.1 6.1V0L0 4.2H3.9"/><path transform="translate(10.10 0)" d="M1 0H2.9Q3.9 0 3.9 1V2Q3.9 3 2.9 3H1Q0 3 0 2V1Q0 0 1 0ZM1 3H2.9Q3.9 3 3.9 4V5.1Q3.9 6.1 2.9 6.1H1Q0 6.1 0 5.1V4Q0 3 1 3Z"/></g><g transform="translate(390.5 402.79999999999995)"><path transform="translate(0.00 0)" d="M0 1.1L1.4 0V6.1"/><path transform="translate(3.05 0)" d="M3.9 0H0.2V2.7H2.9Q3.9 2.7 3.9 3.7V5.1Q3.9 6.1 2.9 6.1H0"/><path transform="translate(8.10 0)" d="M1 0H2.9Q3.9 0 3.9 1V2Q3.9 3 2.9 3H1Q0 3 0 2V1Q0 0 1 0ZM1 3H2.9Q3.9 3 3.9 4V5.1Q3.9 6.1 2.9 6.1H1Q0 6.1 0 5.1V4Q0 3 1 3Z"/><path transform="translate(13.15 0)" d="M1 0H2.9Q3.9 0 3.9 1V5.1Q3.9 6.1 2.9 6.1H1Q0 6.1 0 5.1V1Q0 0 1 0Z"/></g><g transform="translate(348.9 458.9)"><path transform="translate(0.00 0)" d="M0 0H2.9Q3.9 0 3.9 1V2.1Q3.9 2.8 3.2 3.2L0 6.1H3.9"/><path transform="translate(5.05 0)" d="M3.9 0H0.2V2.7H2.9Q3.9 2.7 3.9 3.7V5.1Q3.9 6.1 2.9 6.1H0"/><path transform="translate(10.10 0)" d="M3.1 6.1V0L0 4.2H3.9"/><path transform="translate(15.15 0)" d="M3.6 0H1Q0 0 0 1V5.1Q0 6.1 1 6.1H2.9Q3.9 6.1 3.9 5.1V3.9Q3.9 2.9 2.9 2.9H0"/></g><g transform="translate(449 452.9)"><path transform="translate(0.00 0)" d="M0 1.1L1.4 0V6.1"/><path transform="translate(3.05 0)" d="M3.9 0H0.2V2.7H2.9Q3.9 2.7 3.9 3.7V5.1Q3.9 6.1 2.9 6.1H0"/><path transform="translate(8.10 0)" d="M3.1 6.1V0L0 4.2H3.9"/><path transform="translate(13.15 0)" d="M0.3 6.1H2.9Q3.9 6.1 3.9 5.1V1Q3.9 0 2.9 0H1Q0 0 0 1V2.2Q0 3.2 1 3.2H3.9"/></g><g transform="translate(854.5 403.5)"><path transform="translate(0.00 0)" d="M0 1.1L1.4 0V6.1"/><path transform="translate(3.05 0)" d="M3.6 0H1Q0 0 0 1V5.1Q0 6.1 1 6.1H2.9Q3.9 6.1 3.9 5.1V3.9Q3.9 2.9 2.9 2.9H0"/><path transform="translate(8.10 0)" d="M0 1.1L1.4 0V6.1"/><path transform="translate(11.15 0)" d="M3.1 6.1V0L0 4.2H3.9"/></g><g transform="translate(836.7 491.59999999999997)"><path transform="translate(0.00 0)" d="M0 1.1L1.4 0V6.1"/><path transform="translate(3.05 0)" d="M1 0H2.9Q3.9 0 3.9 1V2Q3.9 3 2.9 3H1Q0 3 0 2V1Q0 0 1 0ZM1 3H2.9Q3.9 3 3.9 4V5.1Q3.9 6.1 2.9 6.1H1Q0 6.1 0 5.1V4Q0 3 1 3Z"/><path transform="translate(8.10 0)" d="M0 1.1L1.4 0V6.1"/><path transform="translate(11.15 0)" d="M1 0H2.9Q3.9 0 3.9 1V5.1Q3.9 6.1 2.9 6.1H1Q0 6.1 0 5.1V1Q0 0 1 0Z"/></g><g transform="translate(881.6 493.9)"><path transform="translate(0.00 0)" d="M0 0H2.9Q3.9 0 3.9 1V2.1Q3.9 2.8 3.2 3.2L0 6.1H3.9"/><path transform="translate(5.05 0)" d="M3.9 0H0.2V2.7H2.9Q3.9 2.7 3.9 3.7V5.1Q3.9 6.1 2.9 6.1H0"/><path transform="translate(10.10 0)" d="M1 0H2.9Q3.9 0 3.9 1V5.1Q3.9 6.1 2.9 6.1H1Q0 6.1 0 5.1V1Q0 0 1 0Z"/><path transform="translate(15.15 0)" d="M3.6 0H1Q0 0 0 1V5.1Q0 6.1 1 6.1H2.9Q3.9 6.1 3.9 5.1V3.9Q3.9 2.9 2.9 2.9H0"/></g><g transform="translate(489 538.6)"><path transform="translate(0.00 0)" d="M0 1.1L1.4 0V6.1"/><path transform="translate(3.05 0)" d="M0 0H3.9L1.3 6.1"/><path transform="translate(8.10 0)" d="M1 0H2.9Q3.9 0 3.9 1V5.1Q3.9 6.1 2.9 6.1H1Q0 6.1 0 5.1V1Q0 0 1 0Z"/><path transform="translate(13.15 0)" d="M0 0H2.9Q3.9 0 3.9 1V2Q3.9 3 2.9 3H1.4M2.9 3Q3.9 3 3.9 4V5.1Q3.9 6.1 2.9 6.1H0"/></g><g transform="translate(464.4 611.8)"><path transform="translate(0.00 0)" d="M0 1.1L1.4 0V6.1"/><path transform="translate(3.05 0)" d="M0.3 6.1H2.9Q3.9 6.1 3.9 5.1V1Q3.9 0 2.9 0H1Q0 0 0 1V2.2Q0 3.2 1 3.2H3.9"/><path transform="translate(8.10 0)" d="M3.9 0H0.2V2.7H2.9Q3.9 2.7 3.9 3.7V5.1Q3.9 6.1 2.9 6.1H0"/><path transform="translate(13.15 0)" d="M0 0H2.9Q3.9 0 3.9 1V2Q3.9 3 2.9 3H1.4M2.9 3Q3.9 3 3.9 4V5.1Q3.9 6.1 2.9 6.1H0"/></g><g transform="translate(599 553.9)"><path transform="translate(0.00 0)" d="M0 1.1L1.4 0V6.1"/><path transform="translate(3.05 0)" d="M0 0H3.9L1.3 6.1"/><path transform="translate(8.10 0)" d="M1 0H2.9Q3.9 0 3.9 1V5.1Q3.9 6.1 2.9 6.1H1Q0 6.1 0 5.1V1Q0 0 1 0Z"/><path transform="translate(13.15 0)" d="M3.9 0H0.2V2.7H2.9Q3.9 2.7 3.9 3.7V5.1Q3.9 6.1 2.9 6.1H0"/></g><g transform="translate(656 563.1999999999999)"><path transform="translate(0.00 0)" d="M0 1.1L1.4 0V6.1"/><path transform="translate(3.05 0)" d="M0 0H3.9L1.3 6.1"/><path transform="translate(8.10 0)" d="M1 0H2.9Q3.9 0 3.9 1V5.1Q3.9 6.1 2.9 6.1H1Q0 6.1 0 5.1V1Q0 0 1 0Z"/><path transform="translate(13.15 0)" d="M3.6 0H1Q0 0 0 1V5.1Q0 6.1 1 6.1H2.9Q3.9 6.1 3.9 5.1V3.9Q3.9 2.9 2.9 2.9H0"/></g><g transform="translate(549.7 602.9)"><path transform="translate(0.00 0)" d="M3.9 0H0.2V2.7H2.9Q3.9 2.7 3.9 3.7V5.1Q3.9 6.1 2.9 6.1H0"/><path transform="translate(5.05 0)" d="M3.9 0H0.2V2.7H2.9Q3.9 2.7 3.9 3.7V5.1Q3.9 6.1 2.9 6.1H0"/><path transform="translate(10.10 0)" d="M3.9 0H0.2V2.7H2.9Q3.9 2.7 3.9 3.7V5.1Q3.9 6.1 2.9 6.1H0"/></g><g transform="translate(719.7 562.5)"><path transform="translate(0.00 0)" d="M0 1.1L1.4 0V6.1"/><path transform="translate(3.05 0)" d="M0 0H3.9L1.3 6.1"/><path transform="translate(8.10 0)" d="M1 0H2.9Q3.9 0 3.9 1V5.1Q3.9 6.1 2.9 6.1H1Q0 6.1 0 5.1V1Q0 0 1 0Z"/><path transform="translate(13.15 0)" d="M0 0H3.9L1.3 6.1"/></g><g transform="translate(776.7 569.4)"><path transform="translate(0.00 0)" d="M0 1.1L1.4 0V6.1"/><path transform="translate(3.05 0)" d="M0 0H3.9L1.3 6.1"/><path transform="translate(8.10 0)" d="M1 0H2.9Q3.9 0 3.9 1V5.1Q3.9 6.1 2.9 6.1H1Q0 6.1 0 5.1V1Q0 0 1 0Z"/><path transform="translate(13.15 0)" d="M1 0H2.9Q3.9 0 3.9 1V2Q3.9 3 2.9 3H1Q0 3 0 2V1Q0 0 1 0ZM1 3H2.9Q3.9 3 3.9 4V5.1Q3.9 6.1 2.9 6.1H1Q0 6.1 0 5.1V4Q0 3 1 3Z"/></g><g transform="translate(836 570.9)"><path transform="translate(0.00 0)" d="M3.9 0H0.2V2.7H2.9Q3.9 2.7 3.9 3.7V5.1Q3.9 6.1 2.9 6.1H0"/><path transform="translate(5.05 0)" d="M3.9 0H0.2V2.7H2.9Q3.9 2.7 3.9 3.7V5.1Q3.9 6.1 2.9 6.1H0"/><path transform="translate(10.10 0)" d="M0 0H2.9Q3.9 0 3.9 1V2.1Q3.9 2.8 3.2 3.2L0 6.1H3.9"/></g><g transform="translate(876.8 553.9)"><path transform="translate(0.00 0)" d="M3.9 0H0.2V2.7H2.9Q3.9 2.7 3.9 3.7V5.1Q3.9 6.1 2.9 6.1H0"/><path transform="translate(5.05 0)" d="M3.9 0H0.2V2.7H2.9Q3.9 2.7 3.9 3.7V5.1Q3.9 6.1 2.9 6.1H0"/><path transform="translate(10.10 0)" d="M1 0H2.9Q3.9 0 3.9 1V5.1Q3.9 6.1 2.9 6.1H1Q0 6.1 0 5.1V1Q0 0 1 0Z"/></g><g transform="translate(664.5 472.9)"><path transform="translate(0.00 0)" d="M0 1.1L1.4 0V6.1"/><path transform="translate(3.05 0)" d="M3.6 0H1Q0 0 0 1V5.1Q0 6.1 1 6.1H2.9Q3.9 6.1 3.9 5.1V3.9Q3.9 2.9 2.9 2.9H0"/><path transform="translate(8.10 0)" d="M0 1.1L1.4 0V6.1"/><path transform="translate(11.15 0)" d="M0 0H2.9Q3.9 0 3.9 1V2.1Q3.9 2.8 3.2 3.2L0 6.1H3.9"/></g><g transform="translate(625.5 462) rotate(-14)"><path transform="translate(0.00 0)" d="M3.1 6.1V0L0 4.2H3.9"/><path transform="translate(5.05 0)" d="M0 0H2.9Q3.9 0 3.9 1V2Q3.9 3 2.9 3H1.4M2.9 3Q3.9 3 3.9 4V5.1Q3.9 6.1 2.9 6.1H0"/><path transform="translate(10.10 0)" d="M0.3 6.1H2.9Q3.9 6.1 3.9 5.1V1Q3.9 0 2.9 0H1Q0 0 0 1V2.2Q0 3.2 1 3.2H3.9"/><path transform="translate(15.15 0)" d="M1 0H2.9Q3.9 0 3.9 1V5.1Q3.9 6.1 2.9 6.1H1Q0 6.1 0 5.1V1Q0 0 1 0Z"/><path transform="translate(20.20 0)" d="M3.9 0H0.2V2.7H2.9Q3.9 2.7 3.9 3.7V5.1Q3.9 6.1 2.9 6.1H0"/></g><g transform="translate(407.5 430) rotate(93)"><path transform="translate(0.00 0)" d="M3.1 6.1V0L0 4.2H3.9"/><path transform="translate(5.05 0)" d="M0 0H2.9Q3.9 0 3.9 1V2Q3.9 3 2.9 3H1.4M2.9 3Q3.9 3 3.9 4V5.1Q3.9 6.1 2.9 6.1H0"/><path transform="translate(10.10 0)" d="M3.9 0H0.2V2.7H2.9Q3.9 2.7 3.9 3.7V5.1Q3.9 6.1 2.9 6.1H0"/><path transform="translate(15.15 0)" d="M1 0H2.9Q3.9 0 3.9 1V5.1Q3.9 6.1 2.9 6.1H1Q0 6.1 0 5.1V1Q0 0 1 0Z"/><path transform="translate(20.20 0)" d="M3.6 0H1Q0 0 0 1V5.1Q0 6.1 1 6.1H2.9Q3.9 6.1 3.9 5.1V3.9Q3.9 2.9 2.9 2.9H0"/></g></g><g fill="none" stroke="#de7410" stroke-width="0.95" stroke-linejoin="round"><g transform="translate(456 314.09999999999997) scale(.93 1)"><path transform="translate(0.00 0)" d="M3.9 0H0.2V2.7H2.9Q3.9 2.7 3.9 3.7V5.1Q3.9 6.1 2.9 6.1H0"/><path transform="translate(5.05 0)" d="M0 0H2.9Q3.9 0 3.9 1V2.1Q3.9 2.8 3.2 3.2L0 6.1H3.9"/><path transform="translate(10.10 0)" d="M3.9 0H0.2V2.7H2.9Q3.9 2.7 3.9 3.7V5.1Q3.9 6.1 2.9 6.1H0"/><path transform="translate(15.15 0)" d="M3.6 0H1Q0 0 0 1V5.1Q0 6.1 1 6.1H2.9Q3.9 6.1 3.9 5.1V3.9Q3.9 2.9 2.9 2.9H0"/><path transform="translate(20.20 0)" d="M0 0H2.9Q3.9 0 3.9 1V2Q3.9 3 2.9 3H1.4M2.9 3Q3.9 3 3.9 4V5.1Q3.9 6.1 2.9 6.1H0"/><path transform="translate(25.25 0)" d="M0 0H2.9Q3.9 0 3.9 1V2.1Q3.9 2.8 3.2 3.2L0 6.1H3.9"/><path transform="translate(30.30 0)" d="M1 0H2.9Q3.9 0 3.9 1V2Q3.9 3 2.9 3H1Q0 3 0 2V1Q0 0 1 0ZM1 3H2.9Q3.9 3 3.9 4V5.1Q3.9 6.1 2.9 6.1H1Q0 6.1 0 5.1V4Q0 3 1 3Z"/><path transform="translate(35.35 0)" d="M3.1 6.1V0L0 4.2H3.9"/></g><g transform="translate(581.3 457.5) scale(.93 1)"><path transform="translate(0.00 0)" d="M3.9 0H0.2V2.7H2.9Q3.9 2.7 3.9 3.7V5.1Q3.9 6.1 2.9 6.1H0"/><path transform="translate(5.05 0)" d="M0 0H2.9Q3.9 0 3.9 1V2.1Q3.9 2.8 3.2 3.2L0 6.1H3.9"/><path transform="translate(10.10 0)" d="M3.9 0H0.2V2.7H2.9Q3.9 2.7 3.9 3.7V5.1Q3.9 6.1 2.9 6.1H0"/><path transform="translate(15.15 0)" d="M3.6 0H1Q0 0 0 1V5.1Q0 6.1 1 6.1H2.9Q3.9 6.1 3.9 5.1V3.9Q3.9 2.9 2.9 2.9H0"/><path transform="translate(20.20 0)" d="M0 0H2.9Q3.9 0 3.9 1V2Q3.9 3 2.9 3H1.4M2.9 3Q3.9 3 3.9 4V5.1Q3.9 6.1 2.9 6.1H0"/><path transform="translate(25.25 0)" d="M3.6 0H1Q0 0 0 1V5.1Q0 6.1 1 6.1H2.9Q3.9 6.1 3.9 5.1V3.9Q3.9 2.9 2.9 2.9H0"/><path transform="translate(30.30 0)" d="M0.3 6.1H2.9Q3.9 6.1 3.9 5.1V1Q3.9 0 2.9 0H1Q0 0 0 1V2.2Q0 3.2 1 3.2H3.9"/><path transform="translate(35.35 0)" d="M0 0H2.9Q3.9 0 3.9 1V2.1Q3.9 2.8 3.2 3.2L0 6.1H3.9"/></g><g transform="translate(773.2 424.7) scale(.93 1)"><path transform="translate(0.00 0)" d="M3.9 0H0.2V2.7H2.9Q3.9 2.7 3.9 3.7V5.1Q3.9 6.1 2.9 6.1H0"/><path transform="translate(5.05 0)" d="M0 0H2.9Q3.9 0 3.9 1V2.1Q3.9 2.8 3.2 3.2L0 6.1H3.9"/><path transform="translate(10.10 0)" d="M3.9 0H0.2V2.7H2.9Q3.9 2.7 3.9 3.7V5.1Q3.9 6.1 2.9 6.1H0"/><path transform="translate(15.15 0)" d="M3.6 0H1Q0 0 0 1V5.1Q0 6.1 1 6.1H2.9Q3.9 6.1 3.9 5.1V3.9Q3.9 2.9 2.9 2.9H0"/><path transform="translate(20.20 0)" d="M0 0H2.9Q3.9 0 3.9 1V2Q3.9 3 2.9 3H1.4M2.9 3Q3.9 3 3.9 4V5.1Q3.9 6.1 2.9 6.1H0"/><path transform="translate(25.25 0)" d="M3.6 0H1Q0 0 0 1V5.1Q0 6.1 1 6.1H2.9Q3.9 6.1 3.9 5.1V3.9Q3.9 2.9 2.9 2.9H0"/><path transform="translate(30.30 0)" d="M0.3 6.1H2.9Q3.9 6.1 3.9 5.1V1Q3.9 0 2.9 0H1Q0 0 0 1V2.2Q0 3.2 1 3.2H3.9"/><path transform="translate(35.35 0)" d="M0 0H2.9Q3.9 0 3.9 1V2Q3.9 3 2.9 3H1.4M2.9 3Q3.9 3 3.9 4V5.1Q3.9 6.1 2.9 6.1H0"/></g><g transform="translate(852.8 427.2) scale(.93 1)"><path transform="translate(0.00 0)" d="M3.9 0H0.2V2.7H2.9Q3.9 2.7 3.9 3.7V5.1Q3.9 6.1 2.9 6.1H0"/><path transform="translate(5.05 0)" d="M0 0H2.9Q3.9 0 3.9 1V2.1Q3.9 2.8 3.2 3.2L0 6.1H3.9"/><path transform="translate(10.10 0)" d="M3.9 0H0.2V2.7H2.9Q3.9 2.7 3.9 3.7V5.1Q3.9 6.1 2.9 6.1H0"/><path transform="translate(15.15 0)" d="M3.6 0H1Q0 0 0 1V5.1Q0 6.1 1 6.1H2.9Q3.9 6.1 3.9 5.1V3.9Q3.9 2.9 2.9 2.9H0"/><path transform="translate(20.20 0)" d="M0 0H2.9Q3.9 0 3.9 1V2Q3.9 3 2.9 3H1.4M2.9 3Q3.9 3 3.9 4V5.1Q3.9 6.1 2.9 6.1H0"/><path transform="translate(25.25 0)" d="M3.6 0H1Q0 0 0 1V5.1Q0 6.1 1 6.1H2.9Q3.9 6.1 3.9 5.1V3.9Q3.9 2.9 2.9 2.9H0"/><path transform="translate(30.30 0)" d="M0.3 6.1H2.9Q3.9 6.1 3.9 5.1V1Q3.9 0 2.9 0H1Q0 0 0 1V2.2Q0 3.2 1 3.2H3.9"/><path transform="translate(35.35 0)" d="M3.1 6.1V0L0 4.2H3.9"/></g><g transform="translate(385.9 510.79999999999995) scale(.93 1)"><path transform="translate(0.00 0)" d="M3.9 0H0.2V2.7H2.9Q3.9 2.7 3.9 3.7V5.1Q3.9 6.1 2.9 6.1H0"/><path transform="translate(5.05 0)" d="M0 0H2.9Q3.9 0 3.9 1V2.1Q3.9 2.8 3.2 3.2L0 6.1H3.9"/><path transform="translate(10.10 0)" d="M3.9 0H0.2V2.7H2.9Q3.9 2.7 3.9 3.7V5.1Q3.9 6.1 2.9 6.1H0"/><path transform="translate(15.15 0)" d="M3.6 0H1Q0 0 0 1V5.1Q0 6.1 1 6.1H2.9Q3.9 6.1 3.9 5.1V3.9Q3.9 2.9 2.9 2.9H0"/><path transform="translate(20.20 0)" d="M0 0H2.9Q3.9 0 3.9 1V2Q3.9 3 2.9 3H1.4M2.9 3Q3.9 3 3.9 4V5.1Q3.9 6.1 2.9 6.1H0"/><path transform="translate(25.25 0)" d="M0 0H2.9Q3.9 0 3.9 1V2.1Q3.9 2.8 3.2 3.2L0 6.1H3.9"/><path transform="translate(30.30 0)" d="M0 0H2.9Q3.9 0 3.9 1V2Q3.9 3 2.9 3H1.4M2.9 3Q3.9 3 3.9 4V5.1Q3.9 6.1 2.9 6.1H0"/><path transform="translate(35.35 0)" d="M3.6 0H1Q0 0 0 1V5.1Q0 6.1 1 6.1H2.9Q3.9 6.1 3.9 5.1V3.9Q3.9 2.9 2.9 2.9H0"/></g></g><g fill="#bdbdbd" font-size="10.5" font-family="Liberation Sans"><text transform="translate(423.5 363.5) rotate(-61)">Exercitation</text><text transform="translate(673.5 458) rotate(-14.5)">Magna Aliqua</text><text transform="translate(704 503.5) rotate(5)">Laboris Nisi</text><text transform="translate(470.5 578) rotate(55)" font-size="9.8">Minim Veniam</text></g><g fill="none"><circle cx="673" cy="475" r="34.8" stroke="#3c4a57" stroke-opacity=".8" stroke-width="9.6"/><circle cx="673" cy="475" r="38.6" stroke="#9aacba" stroke-opacity=".55" stroke-width="1"/><circle cx="673" cy="475" r="36.6" stroke="#7d8e9c" stroke-opacity=".5" stroke-width=".8"/><circle cx="673" cy="475" r="34.2" stroke="#66788a" stroke-opacity=".45" stroke-width=".8"/><circle cx="673" cy="475" r="30.6" stroke="#222a32" stroke-opacity=".7" stroke-width="1.2"/></g><path d="M673 473.8 L673 499 L678.4 493.8 L683 504.6 L687.4 502.6 L683 492.3 L690.3 491.6 Z" fill="#fff" stroke="#111" stroke-width="1.3" stroke-linejoin="round"/></svg><!-- /MAP -->
<!-- vscroll -->
<div class="a" style="left:1139px;top:170px;width:14px;height:578px;background:#f5f5f5"></div>
<div class="a" style="left:1143px;top:318px;width:8px;height:266.5px;background:#7f7f7f;border-radius:4px"></div>
<!-- hscroll -->
<div class="a" style="left:95px;top:732px;width:1044px;height:16px;background:#f5f5f5"></div>
<div class="a" style="left:215px;top:736px;width:748px;height:8px;background:#7f7f7f;border-radius:4px"></div>
<div class="a" style="left:1085px;top:732px;width:68px;height:16px;background:#ececec"></div>
<div class="a" style="left:1103px;top:733px;font-size:13px;color:#111">10 &lt; 100</div>
<!-- command -->
<div class="a" style="left:72px;top:748px;width:1081px;height:50px;background:#ececec;border-top:1px solid #c6c6c6"></div>
<div class="a" style="left:73px;top:749px;width:1079px;height:22px;background:#fff;border-bottom:1px solid #c2c2c2"></div>
<div class="a" style="left:77px;top:751px;font-size:13px;font-style:italic;color:#1010d0">Comando: gf</div>
<div class="a" style="left:1142px;top:750px;width:8px;height:17px;background:#7f7f7f;border-radius:4px"></div>
<div class="a" style="left:73px;top:778px;font-size:13px;color:#111">Comando:</div>
<div class="a" style="left:138px;top:776px;width:988px;height:18px;background:#fff"></div>
<div class="a" style="left:1127px;top:772px;width:25px;height:25px;border:1px solid #c6c6c6;background:#f3f3f3"></div>
<div class="a" style="left:1131px;top:780px;width:16px;height:11px;border:1px solid #111;border-top:3px solid #111"></div>

<!-- status bar -->
<div class="a" style="left:0;top:798px;width:1500px;height:46px;background:#dcdcdc;border-top:1px solid #cacaca"></div>
<div class="a" style="left:2px;top:807.5px;font-size:9px;letter-spacing:.7px;color:#1a1a1a">268.9361,178.2995</div>
<div class="a" style="left:2px;top:827.5px;font-size:9px;letter-spacing:.7px;color:#1a1a1a">@268.9361,178.2995</div>
<div class="a" style="left:253px;top:802px;width:1px;height:40px;background:#9a9a9a;box-shadow:1px 0 0 #f4f4f4"></div>
<div class="a" style="left:256px;top:807.5px;font-size:9px;letter-spacing:.9px;color:#1a1a1a">322.6722&lt;34°</div>
<div class="a" style="left:256px;top:827.5px;font-size:9px;letter-spacing:.9px;color:#1a1a1a">@322.6722&lt;34°</div>
<div class="a" style="left:948.5px;top:817px;font-size:9px;letter-spacing:.72px;color:#1a1a1a">No hay entidades seleccionadas.</div><div class="a" style="left:940.5px;top:819px;width:6px;height:6px;border-radius:3px;background:#c6c6c6"></div><div class="a" style="left:1269px;top:819px;width:6px;height:6px;border-radius:3px;background:#c6c6c6"></div><div class="a" style="left:506.5px;top:819px;width:6px;height:6px;border-radius:3px;background:#c6c6c6"></div><svg class="a" style="left:716px;top:805px" width="20" height="32" viewBox="0 0 20 32"><rect x="1.5" y="1.5" width="17" height="29" rx="8.5" fill="#fff" stroke="#555" stroke-width="1"/><path d="M1.5 13 Q10 10.5 18.5 13" stroke="#444" stroke-width="1.6" fill="none"/><rect x="8.2" y="3.5" width="3.6" height="7" rx="1.8" fill="#fff" stroke="#444" stroke-width="1"/><path d="M10 1.5v2M10 10.5v2" stroke="#444"/></svg>

<!-- right dock -->
<div class="a" style="left:1153px;top:122px;width:302px;height:676px;background:#ececec"></div><svg class="a" style="left:1156px;top:125px" width="16" height="16" viewBox="0 0 16 16"><circle cx="8" cy="8" r="7" fill="#6a6a6a"/><path d="M5.2 5.2l5.6 5.6M10.8 5.2l-5.6 5.6" stroke="#fff" stroke-width="1.8"/></svg><svg class="a" style="left:1174px;top:125px" width="16" height="16" viewBox="0 0 16 16"><circle cx="8" cy="8" r="7" fill="#6a6a6a"/><rect x="6" y="4.5" width="5.5" height="4.5" fill="none" stroke="#fff" stroke-width="1.1"/><rect x="4.2" y="6.8" width="5.5" height="4.5" fill="#6a6a6a" stroke="#fff" stroke-width="1.1"/></svg><div class="a" style="left:1155px;top:127px;width:299px;text-align:center;font-size:12px;color:#333;padding-left:35px">Lista de capas</div><div class="a" style="left:1155px;top:145px;width:60px;height:26px;border:1px solid #b4b4b4;border-right:2px solid #b4b4b4;background:linear-gradient(#f6f6f6,#e6e6e6)"></div><div class="a" style="left:1215px;top:145px;width:60px;height:26px;border:1px solid #b4b4b4;border-right:2px solid #b4b4b4;background:linear-gradient(#f6f6f6,#e6e6e6)"></div><div class="a" style="left:1275px;top:145px;width:60px;height:26px;border:1px solid #b4b4b4;border-right:2px solid #b4b4b4;background:linear-gradient(#f6f6f6,#e6e6e6)"></div><div class="a" style="left:1335px;top:145px;width:60px;height:26px;border:1px solid #b4b4b4;border-right:2px solid #b4b4b4;background:linear-gradient(#f6f6f6,#e6e6e6)"></div><div class="a" style="left:1395px;top:145px;width:60px;height:26px;border:1px solid #b4b4b4;border-right:2px solid #b4b4b4;background:linear-gradient(#f6f6f6,#e6e6e6)"></div><svg class="a" style="left:1176px;top:152px" width="18" height="12" viewBox="0 0 18 12"><path d="M1 6 Q9 -2 17 6 Q9 14 1 6 Z" fill="#000"/><circle cx="9" cy="6" r="3.2" fill="#fff"/><circle cx="9" cy="6" r="2" fill="#000"/></svg><svg class="a" style="left:1236px;top:152px" width="18" height="12" viewBox="0 0 18 12"><path d="M1 6 Q9 -2 17 6 Q9 14 1 6 Z" fill="#a8a8a8"/><circle cx="9" cy="6" r="3.2" fill="#fff"/><circle cx="9" cy="6" r="2" fill="#a8a8a8"/></svg><svg class="a" style="left:1296px;top:150px" width="16" height="16" viewBox="0 0 16 16"><path d="M8 2v12M2 8h12" stroke="#e00000" stroke-width="3.2"/><path d="M8 2v12M2 8h12" stroke="#000" stroke-width="3.8" stroke-opacity=".15"/></svg><div class="a" style="left:1358px;top:156px;width:12px;height:4px;background:#e00000;box-shadow:0 0 0 .5px #600"></div><svg class="a" style="left:1416px;top:150px" width="16" height="16" viewBox="0 0 16 16"><path d="M1 15 L2.5 11 L12.5 1.5 Q13.5 .8 14.5 1.5 Q15.2 2.5 14.5 3.5 L4.5 13.5 Z" fill="#e8b040" stroke="#8a6020" stroke-width=".8"/><path d="M12 2 L14 4" stroke="#e03030" stroke-width="2"/></svg><div class="a" style="left:1155px;top:171px;width:299px;height:388px;background:#fff;border-left:1px solid #c8c8c8;border-bottom:1px solid #c8c8c8"></div><div class="a" style="left:1181px;top:178px;width:16px;height:9.5px;border:1.3px solid #000"></div><div class="a" style="left:1203px;top:175px;font-size:13px;color:#111">0</div><svg class="a" style="left:1393px;top:174px" width="16" height="16" viewBox="0 0 16 16"><path d="M1 15 L2.5 11 L12.5 1.5 Q13.5 .8 14.5 1.5 Q15.2 2.5 14.5 3.5 L4.5 13.5 Z" fill="#e8b040" stroke="#8a6020" stroke-width=".8"/><path d="M12 2 L14 4" stroke="#e03030" stroke-width="2"/></svg><svg class="a" style="left:1414px;top:176px" width="18" height="12" viewBox="0 0 18 12"><path d="M1 6 Q9 -2 17 6 Q9 14 1 6 Z" fill="#000"/><circle cx="9" cy="6" r="3.2" fill="#fff"/><circle cx="9" cy="6" r="2" fill="#000"/></svg><svg class="a" style="left:1439px;top:175px" width="12" height="14" viewBox="0 0 12 14"><path d="M2.5 7V4.5Q2.5 1 6 1Q9.5 1 9.5 4.5V7" fill="none" stroke="#b0b0b0" stroke-width="1.5"/><rect x="1" y="6.5" width="10" height="7" rx="1" fill="#b0b0b0"/></svg><svg class="a" style="left:1156px;top:561px" width="16" height="16" viewBox="0 0 16 16"><circle cx="8" cy="8" r="7" fill="#6a6a6a"/><path d="M5.2 5.2l5.6 5.6M10.8 5.2l-5.6 5.6" stroke="#fff" stroke-width="1.8"/></svg><svg class="a" style="left:1174px;top:561px" width="16" height="16" viewBox="0 0 16 16"><circle cx="8" cy="8" r="7" fill="#6a6a6a"/><rect x="6" y="4.5" width="5.5" height="4.5" fill="none" stroke="#fff" stroke-width="1.1"/><rect x="4.2" y="6.8" width="5.5" height="4.5" fill="#6a6a6a" stroke="#fff" stroke-width="1.1"/></svg><div class="a" style="left:1155px;top:563px;width:299px;text-align:center;font-size:12px;color:#333;padding-left:35px">Filtro de selección</div><div class="a" style="left:1155px;top:579px;width:299px;height:1px;background:#cfcfcf"></div><div class="a" style="left:1167px;top:594px;width:276px;height:130px;background:#e4e4e4;border-top:1px solid #dadada"></div><div class="a" style="left:1173.5px;top:586px;font-size:11px;color:#222">Filtro</div><div class="a" style="left:1182px;top:617.5px;font-size:13.7px;color:#1a1a1a">Tipo:</div><div class="a" style="left:1182px;top:643.5px;font-size:13.7px;color:#1a1a1a">Característica:</div><div class="a" style="left:1182px;top:669.5px;font-size:13.7px;color:#1a1a1a">Comparación:</div><div class="a" style="left:1182px;top:692.5px;font-size:13.7px;color:#1a1a1a">Valor:</div><div class="a" style="left:1277px;top:614px;width:151px;height:21px;background:#fff;border:1px solid #cfd3da;border-radius:6px"></div><svg class="a" style="left:1409px;top:617px" width="16" height="16" viewBox="0 0 16 16"><rect width="16" height="16" rx="4" fill="#1a7cf6"/><path d="M5 6.5l3-3 3 3M5 9.5l3 3 3-3" stroke="#fff" stroke-width="1.4" fill="none"/></svg><div class="a" style="left:1277px;top:640px;width:151px;height:21px;background:#fff;border:1px solid #cfd3da;border-radius:6px"></div><svg class="a" style="left:1409px;top:643px" width="16" height="16" viewBox="0 0 16 16"><rect width="16" height="16" rx="4" fill="#1a7cf6"/><path d="M5 6.5l3-3 3 3M5 9.5l3 3 3-3" stroke="#fff" stroke-width="1.4" fill="none"/></svg><div class="a" style="left:1277px;top:666px;width:151px;height:21px;background:#fff;border:1px solid #cfd3da;border-radius:6px"></div><svg class="a" style="left:1409px;top:669px" width="16" height="16" viewBox="0 0 16 16"><rect width="16" height="16" rx="4" fill="#1a7cf6"/><path d="M5 6.5l3-3 3 3M5 9.5l3 3 3-3" stroke="#fff" stroke-width="1.4" fill="none"/></svg><div class="a" style="left:1167px;top:739px;width:69px;height:26px;border:1px solid #a8a8a8;background:linear-gradient(#fafafa,#ececec)"></div><div class="a" style="left:1236px;top:739px;width:69px;height:26px;border:1px solid #a8a8a8;background:linear-gradient(#fafafa,#ececec)"></div><div class="a" style="left:1305px;top:739px;width:69px;height:26px;border:1px solid #a8a8a8;background:linear-gradient(#fafafa,#ececec)"></div><div class="a" style="left:1374px;top:739px;width:69px;height:26px;border:1px solid #a8a8a8;background:linear-gradient(#fafafa,#ececec)"></div><svg class="a" style="left:1193px;top:744px" width="16" height="16" viewBox="0 0 16 16"><rect x="2" y="2" width="12" height="12" fill="#f89090" stroke="#c03030" stroke-dasharray="1 1" stroke-width=".8"/></svg><svg class="a" style="left:1261px;top:743px" width="18" height="18" viewBox="0 0 18 18"><rect x="2" y="2" width="10" height="10" fill="#f89090" stroke="#8a3030" stroke-width=".8"/><rect x="5" y="5" width="10" height="10" fill="#f89090" stroke="#222" stroke-dasharray="1 1" stroke-width=".8"/></svg><svg class="a" style="left:1330px;top:743px" width="18" height="18" viewBox="0 0 18 18"><rect x="2" y="2" width="10" height="10" fill="#f89090" stroke="#8a3030" stroke-width=".8"/><rect x="5" y="5" width="10" height="10" fill="#fff" fill-opacity=".9" stroke="#222" stroke-dasharray="1 1" stroke-width=".8"/></svg><svg class="a" style="left:1399px;top:743px" width="18" height="18" viewBox="0 0 18 18"><rect x="2" y="2" width="10" height="10" fill="#fff" stroke="#222" stroke-width=".8"/><rect x="5" y="5" width="10" height="10" fill="none" stroke="#222" stroke-dasharray="1 1" stroke-width=".8"/><rect x="5" y="5" width="7" height="7" fill="#f89090"/></svg><div class="a" style="left:1455px;top:122px;width:45px;height:676px;background:linear-gradient(90deg,#e4e4e4,#dcdcdc 75%,#c0c0c0)"></div><div class="a" style="left:1462px;top:132px;width:30px;height:2px;background-image:linear-gradient(90deg,#a8a8a8 2px,transparent 2px);background-size:6px 2px"></div><div class="a" style="left:1457px;top:276px;width:42px;height:1px;background-image:linear-gradient(90deg,#909090 1px,transparent 1px);background-size:3px 1px"></div><div class="a" style="left:1457px;top:425px;width:42px;height:1px;background-image:linear-gradient(90deg,#909090 1px,transparent 1px);background-size:3px 1px"></div><div class="a" style="left:1457px;top:528px;width:42px;height:1px;background-image:linear-gradient(90deg,#909090 1px,transparent 1px);background-size:3px 1px"></div><div class="sel" style="left:1456px;top:135px;width:42px;height:42px;border-radius:6px"></div><div class="sel" style="left:1456px;top:330px;width:42px;height:42px;border-radius:6px"></div><div class="sel" style="left:1456px;top:433px;width:42px;height:43px;border-radius:6px"></div><svg class="a" style="left:1463px;top:142px" width="28" height="28" viewBox="0 0 28 28"><rect x=".5" y=".5" width="27" height="27" fill="#fff" stroke="#111"/><rect x="0" y="0" width="28" height="4.5" fill="#111"/><rect x="1.5" y="1" width="3" height="2.5" fill="#fff"/><path d="M9 10 L19 7 L19 19 L9 22 Z" fill="#ddd" stroke="#333" stroke-width=".8"/><path d="M12 9 L22 6 L22 18 L12 21 Z" fill="#fff" stroke="#333" stroke-width=".8"/><path d="M15 17 L19 10 L19 17 Z" fill="none" stroke="#e03030" stroke-width=".8"/></svg><svg class="a" style="left:1463px;top:189px" width="28" height="28" viewBox="0 0 28 28"><rect x=".5" y=".5" width="27" height="27" fill="#fff" stroke="#111"/><rect x="0" y="0" width="28" height="4.5" fill="#111"/><rect x="1.5" y="1" width="3" height="2.5" fill="#fff"/><rect x="6" y="9" width="10" height="8" fill="#f2e8c0" stroke="#333" stroke-width=".8"/><circle cx="15" cy="17" r="5" fill="#f2e8c0" stroke="#333" stroke-width=".8"/></svg><svg class="a" style="left:1463px;top:235px" width="28" height="28" viewBox="0 0 28 28"><rect x=".5" y=".5" width="27" height="27" fill="#fff" stroke="#111"/><rect x="0" y="0" width="28" height="4.5" fill="#111"/><rect x="1.5" y="1" width="3" height="2.5" fill="#fff"/><rect x="5" y="9" width="18" height="13" rx="2" fill="#f2f2f2" stroke="#a8c0e0" stroke-width=".8"/></svg><svg class="a" style="left:1463px;top:291px" width="28" height="28" viewBox="0 0 28 28"><rect x=".5" y=".5" width="27" height="27" fill="#fff" stroke="#111"/><rect x="0" y="0" width="28" height="4.5" fill="#111"/><rect x="1.5" y="1" width="3" height="2.5" fill="#fff"/><rect x="5" y="9" width="4" height="3" fill="#111"/><rect x="5" y="15" width="4" height="3" fill="#111"/><rect x="5" y="21" width="4" height="3" fill="#111"/><rect x="11" y="9" width="13" height="3" fill="none" stroke="#111" stroke-width=".8"/><rect x="11" y="15" width="13" height="3" fill="none" stroke="#111" stroke-width=".8"/><rect x="11" y="21" width="13" height="3" fill="none" stroke="#111" stroke-width=".8"/></svg><svg class="a" style="left:1463px;top:337px" width="28" height="28" viewBox="0 0 28 28"><rect x=".5" y=".5" width="27" height="27" fill="#fff" stroke="#111"/><rect x="0" y="0" width="28" height="4.5" fill="#111"/><rect x="1.5" y="1" width="3" height="2.5" fill="#fff"/><path d="M6 9 L22 9 L16 15 L16 23 L13 22 L13 15 Z" fill="#aaa" stroke="#333" stroke-width=".8"/></svg><svg class="a" style="left:1463px;top:384px" width="28" height="28" viewBox="0 0 28 28"><rect x=".5" y=".5" width="27" height="27" fill="#fff" stroke="#111"/><rect x="0" y="0" width="28" height="4.5" fill="#111"/><rect x="1.5" y="1" width="3" height="2.5" fill="#fff"/><path d="M6 10 L6 22 L12 18 L12 13 Z M12 12h10v8H12z" fill="#ddd" stroke="#333" stroke-width=".8"/><path d="M4 16h20" stroke="#e06060" stroke-width=".6" stroke-dasharray="1 1"/></svg><svg class="a" style="left:1463px;top:440px" width="28" height="28" viewBox="0 0 28 28"><rect x=".5" y=".5" width="27" height="27" fill="#fff" stroke="#111"/><rect x="0" y="0" width="28" height="4.5" fill="#111"/><rect x="1.5" y="1" width="3" height="2.5" fill="#fff"/><path d="M2.5 9h13M2.5 12h12M2.5 15h13M2.5 18.5h15" stroke="#999" stroke-width="1"/><path d="M0 22.5h28" stroke="#111" stroke-width=".8"/><path d="M9 25.3h15" stroke="#888" stroke-width="1.2"/><path d="M3.5 24l-1.5 1.3 1.5 1.3" stroke="#666" stroke-width=".7" fill="none"/></svg><svg class="a" style="left:1463px;top:487px" width="28" height="28" viewBox="0 0 28 28"><rect x=".5" y=".5" width="27" height="27" fill="#fff" stroke="#111"/><rect x="0" y="0" width="28" height="4.5" fill="#111"/><rect x="1.5" y="1" width="3" height="2.5" fill="#fff"/><rect x="7.8" y="9" width="13" height="14.5" rx="1" fill="#c08838" stroke="#8a5a20" stroke-width=".6"/><rect x="9.3" y="10.5" width="10" height="11.5" fill="#f4f4f4"/><rect x="11" y="7.8" width="6.5" height="2.8" rx="1" fill="#8a8a80"/><path d="M10.5 13h7M10.5 15h7M10.5 17h7" stroke="#bbb" stroke-width=".6"/><path d="M19.3 19.5v2.5h-2.5z" fill="#999"/></svg><svg class="a" style="left:1455px;top:535px" width="45" height="40" viewBox="1455 535 45 40"><path d="M1465 549.6 H1470 Q1474.4 549.6 1474.4 553.3 Q1474.4 557 1470 557 H1467 M1470 557 Q1474.4 557 1474.4 561 Q1474.4 565 1470 565 H1465 M1478.8 549.6 H1483 Q1489.4 549.6 1489.4 557.3 Q1489.4 565 1483 565 H1478.8 Z" fill="none" stroke="#111" stroke-width="1.25"/></svg>
</body></html>
